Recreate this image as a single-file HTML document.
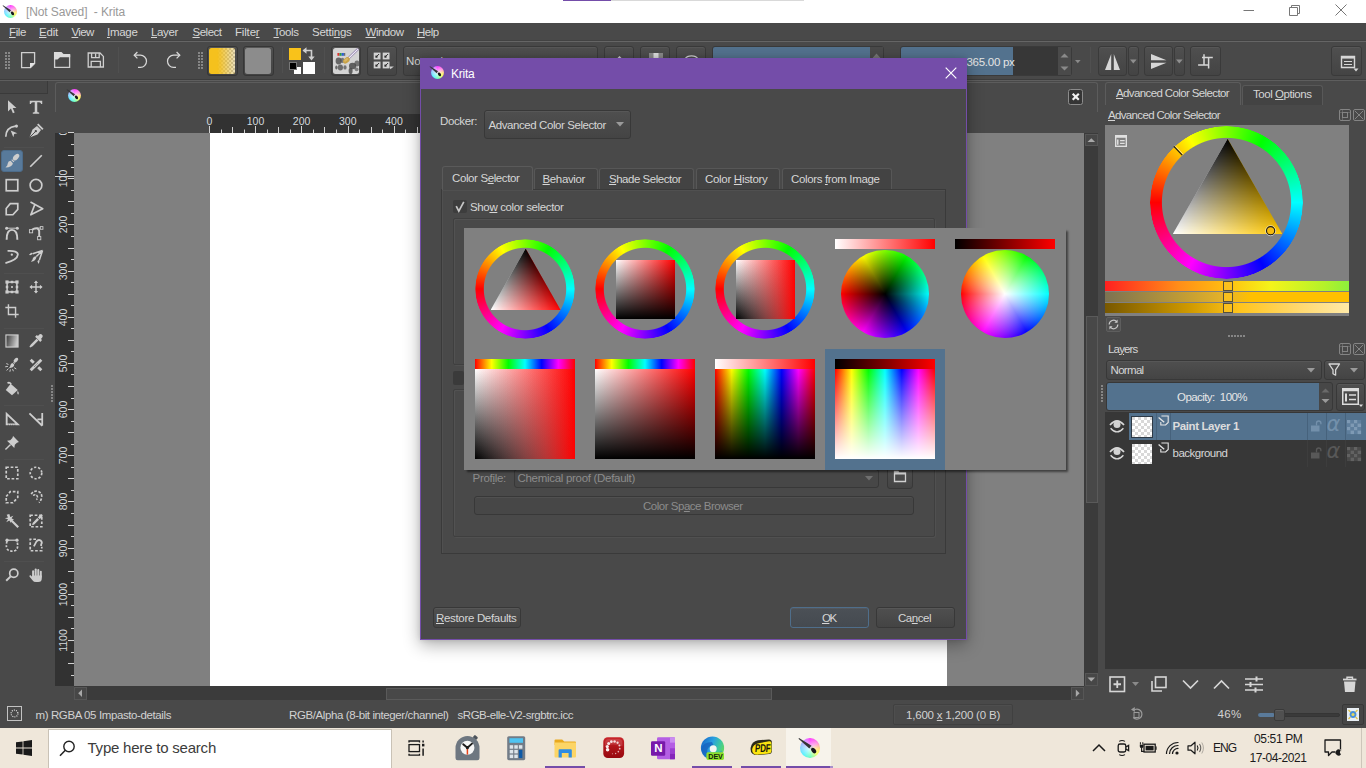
<!DOCTYPE html>
<html lang="en"><head><meta charset="utf-8"><title>Krita</title>
<style>
html,body{margin:0;padding:0;}
body{width:1366px;height:768px;overflow:hidden;position:relative;background:#494949;font-family:"Liberation Sans",sans-serif;font-size:11px;color:#d2d2d2;}
.a{position:absolute;box-sizing:border-box;}
.t{position:absolute;white-space:pre;}
u{text-decoration:underline;text-underline-offset:1px;text-decoration-thickness:1px;}
svg{overflow:visible;}
</style></head><body>
<!-- p10_chrome -->
<div class="a" style="left:0px;top:0px;width:1366px;height:23px;background:#ffffff;"></div>
<div class="a" style="left:563px;top:0px;width:48px;height:1px;background:#744da9;"></div>
<div class="a" style="left:611px;top:0px;width:193px;height:1px;background:#d9d9d9;"></div>
<div class="a" style="left:1px;top:1.5px;width:16px;height:16px;"><div class="a" style="left:2.5px;top:3px;width:13px;height:13px;border-radius:50%;background:radial-gradient(circle at 48% 55%,rgba(255,255,255,.8) 0,rgba(255,255,255,.35) 38%,rgba(255,255,255,0) 68%),conic-gradient(from 0deg,#ff3cff 0deg,#ff8ee0 55deg,#ffee60 105deg,#f4ff58 130deg,#58ffb0 175deg,#3cf0ff 225deg,#8cc4ff 285deg,#e07cff 335deg,#ff3cff 360deg);"></div><svg class="a" style="left:0;top:0" width="16" height="16" viewBox="0 0 16 16"><path d="M1.98 3.26L10.12 8.24L8.68 10.16L1.62 3.74Z" fill="#353538"/><path d="M10.12 8.24L10.9 8.9L9.5 10.8L8.68 10.16Z" fill="#c9c9d2"/><ellipse cx="11.5" cy="11.4" rx="2" ry="1.35" transform="rotate(52 11.5 11.4)" fill="#16161c"/></svg></div>
<span class="t" style="left:26px;top:3.5px;font-size:12px;line-height:16px;color:#999999;letter-spacing:-0.119px;">[Not Saved]  - Krita</span>
<svg class="a" style="left:1243px;top:5px;" width="12" height="12" viewBox="0 0 12 12"><path d="M0.5 5.5H11" stroke="#777" stroke-width="1" fill="none"/></svg>
<svg class="a" style="left:1289px;top:5px;" width="12" height="12" viewBox="0 0 12 12"><path d="M0.5 2.5H8.5V10.5H0.5Z M2.5 2.5V0.5H10.5V8.5H8.5" stroke="#777" stroke-width="1" fill="none"/></svg>
<svg class="a" style="left:1335px;top:4px;" width="12" height="12" viewBox="0 0 12 12"><path d="M0.5 0.5L11.5 11.5M11.5 0.5L0.5 11.5" stroke="#777" stroke-width="1" fill="none"/></svg>
<div class="a" style="left:0px;top:23px;width:1366px;height:18px;background:#494949;"></div>
<span class="t" style="left:9px;top:25.05px;font-size:11.5px;line-height:15.5px;color:#d6d6d6;letter-spacing:-0.382px;"><u>F</u>ile</span>
<span class="t" style="left:39px;top:25.05px;font-size:11.5px;line-height:15.5px;color:#d6d6d6;letter-spacing:-0.204px;"><u>E</u>dit</span>
<span class="t" style="left:71.5px;top:25.05px;font-size:11.5px;line-height:15.5px;color:#d6d6d6;letter-spacing:-0.679px;"><u>V</u>iew</span>
<span class="t" style="left:107px;top:25.05px;font-size:11.5px;line-height:15.5px;color:#d6d6d6;letter-spacing:-0.292px;"><u>I</u>mage</span>
<span class="t" style="left:151px;top:25.05px;font-size:11.5px;line-height:15.5px;color:#d6d6d6;letter-spacing:-0.353px;"><u>L</u>ayer</span>
<span class="t" style="left:192.5px;top:25.05px;font-size:11.5px;line-height:15.5px;color:#d6d6d6;letter-spacing:-0.493px;"><u>S</u>elect</span>
<span class="t" style="left:235px;top:25.05px;font-size:11.5px;line-height:15.5px;color:#d6d6d6;letter-spacing:-0.176px;">Filte<u>r</u></span>
<span class="t" style="left:273.5px;top:25.05px;font-size:11.5px;line-height:15.5px;color:#d6d6d6;letter-spacing:-0.369px;"><u>T</u>ools</span>
<span class="t" style="left:312px;top:25.05px;font-size:11.5px;line-height:15.5px;color:#d6d6d6;letter-spacing:-0.256px;">Setti<u>n</u>gs</span>
<span class="t" style="left:365.5px;top:25.05px;font-size:11.5px;line-height:15.5px;color:#d6d6d6;letter-spacing:-0.483px;"><u>W</u>indow</span>
<span class="t" style="left:417px;top:25.05px;font-size:11.5px;line-height:15.5px;color:#d6d6d6;letter-spacing:-0.537px;"><u>H</u>elp</span>
<div class="a" style="left:0px;top:40px;width:1366px;height:1px;background:#424242;"></div>
<div class="a" style="left:0px;top:41px;width:1366px;height:1px;background:#656565;"></div>
<div class="a" style="left:0px;top:79px;width:1366px;height:1px;background:#3d3d3d;"></div>
<div class="a" style="left:0px;top:80px;width:1366px;height:1px;background:#5e5e5e;"></div>
<!-- p20_toolbar -->
<svg class="a" style="left:5px;top:52px;" width="5" height="17" viewBox="0 0 5 17"><g fill="#868686"><rect x="0" y="0" width="2" height="2"/><rect x="3" y="0" width="2" height="2"/><rect x="0" y="3" width="2" height="2"/><rect x="3" y="3" width="2" height="2"/><rect x="0" y="6" width="2" height="2"/><rect x="3" y="6" width="2" height="2"/><rect x="0" y="9" width="2" height="2"/><rect x="3" y="9" width="2" height="2"/><rect x="0" y="12" width="2" height="2"/><rect x="3" y="12" width="2" height="2"/><rect x="0" y="15" width="2" height="2"/><rect x="3" y="15" width="2" height="2"/></g></svg>
<svg class="a" style="left:20px;top:51px;" width="16" height="18" viewBox="0 0 16 18"><path d="M1.6 1.6H14.6V12.5L10.5 16.6H1.6Z" fill="none" stroke="#cfcfcf" stroke-width="1.3"/><path d="M10 12h5L10 17z" fill="#e4e4e4"/></svg>
<svg class="a" style="left:53px;top:51px;" width="18" height="18" viewBox="0 0 18 18"><path d="M1.6 1.6V16.4H16.6V3.6" fill="none" stroke="#cfcfcf" stroke-width="1.3"/><path d="M1 1H8.5L10.5 3H17.2V6.2H7L4.5 8.6H1Z" fill="#dcdcdc"/></svg>
<svg class="a" style="left:87px;top:51px;" width="18" height="17" viewBox="0 0 18 17"><path d="M1.2 2H13L16.4 5.4V16H1.2Z" fill="none" stroke="#cfcfcf" stroke-width="1.3"/><path d="M4.6 2V6.6H12.2V2M4.2 16V10.4H13.4V16M8.6 2.4V6.2" fill="none" stroke="#cfcfcf" stroke-width="1.3"/></svg>
<div class="a" style="left:118px;top:47px;width:1px;height:26px;background:#505050;"></div>
<svg class="a" style="left:132.8px;top:51px;" width="14" height="18" viewBox="0 0 14 18"><path d="M1.4 4.2H7.4A6.1 6.1 0 0 1 7.4 16.4H5" fill="none" stroke="#d8d8d8" stroke-width="1.25"/><path d="M4.4 1L1.2 4.2L4.4 7.4" fill="none" stroke="#d8d8d8" stroke-width="1.25"/></svg>
<svg class="a" style="left:166.8px;top:51px;" width="14" height="18" viewBox="0 0 14 18"><path d="M12.6 4.2H6.6A6.1 6.1 0 0 0 6.6 16.4H9" fill="none" stroke="#d8d8d8" stroke-width="1.25"/><path d="M9.6 1L12.8 4.2L9.6 7.4" fill="none" stroke="#d8d8d8" stroke-width="1.25"/></svg>
<svg class="a" style="left:197.8px;top:52px;" width="5" height="17" viewBox="0 0 5 17"><g fill="#868686"><rect x="0" y="0" width="2" height="2"/><rect x="3" y="0" width="2" height="2"/><rect x="0" y="3" width="2" height="2"/><rect x="3" y="3" width="2" height="2"/><rect x="0" y="6" width="2" height="2"/><rect x="3" y="6" width="2" height="2"/><rect x="0" y="9" width="2" height="2"/><rect x="3" y="9" width="2" height="2"/><rect x="0" y="12" width="2" height="2"/><rect x="3" y="12" width="2" height="2"/><rect x="0" y="15" width="2" height="2"/><rect x="3" y="15" width="2" height="2"/></g></svg>
<div class="a" style="left:207px;top:45.5px;width:30.5px;height:30.5px;background:linear-gradient(180deg,#4f4f4f,#444444);border:1px solid #363636;border-radius:3px;box-shadow:inset 0 1px 0 rgba(255,255,255,.05);"><div class="a" style="left:1.2px;top:1.5px;width:26px;height:26px;background:#f5c11d;border-radius:2.5px;overflow:hidden;"><div class="a" style="left:0;top:0;width:100%;height:100%;background:repeating-conic-gradient(#e9e9e9 0 25%,#b9b9b9 0 50%) 0 0/4px 4px;-webkit-mask:linear-gradient(90deg,transparent 32%,rgba(0,0,0,.78) 100%);mask:linear-gradient(90deg,transparent 32%,rgba(0,0,0,.78) 100%);"></div></div></div>
<div class="a" style="left:243px;top:45.5px;width:30.5px;height:30.5px;background:linear-gradient(180deg,#4f4f4f,#444444);border:1px solid #363636;border-radius:3px;box-shadow:inset 0 1px 0 rgba(255,255,255,.05);"><div class="a" style="left:1.2px;top:1.5px;width:26px;height:26px;background:#8c8c8c;border-radius:2.5px;"></div></div>
<div class="a" style="left:282px;top:47px;width:1px;height:26px;background:#505050;"></div>
<div class="a" style="left:289px;top:48px;width:12.2px;height:12.2px;background:#f9c21a;"></div>
<div class="a" style="left:303px;top:62px;width:12.2px;height:12.2px;background:#ffffff;"></div>
<div class="a" style="left:293.8px;top:67px;width:6.8px;height:6.6px;background:#ffffff;"></div>
<div class="a" style="left:289px;top:62.2px;width:8px;height:8px;background:#000000;border:1px solid #777;"></div>
<svg class="a" style="left:302px;top:47px;" width="14" height="14" viewBox="0 0 14 14"><path d="M1.5 3.5H9.5V10.5" fill="none" stroke="#cfcfcf" stroke-width="1.6"/><path d="M0.5 3.5L4.5 0.3V6.7Z M9.5 13.5L6.3 9.5H12.7Z" fill="#cfcfcf"/></svg>
<div class="a" style="left:324px;top:47px;width:1px;height:26px;background:#505050;"></div>
<div class="a" style="left:330.8px;top:45.5px;width:30.5px;height:30.5px;background:linear-gradient(180deg,#4f4f4f,#444444);border:1px solid #3a3a3a;border-radius:3px;box-shadow:inset 0 1px 0 rgba(255,255,255,.05);"><div class="a" style="left:1.2px;top:1.5px;width:26px;height:26px;background:#d4d4d4;border-radius:2.5px;overflow:hidden;"><svg width="27" height="27" viewBox="0 0 27 27" style="position:absolute;left:0;top:0"><rect x="4.4" y="5" width="2.1" height="2.8" fill="#e03030"/><rect x="6.5" y="5" width="2.1" height="2.8" fill="#2ea040"/><rect x="8.6" y="5" width="2.3" height="2.8" fill="#2c5fd0"/><rect x="11.2" y="5" width="1" height="2.8" fill="#555"/><g fill="#4a4a4a"><ellipse cx="5.6" cy="13" rx="3" ry="3.4" opacity=".8"/><ellipse cx="9.4" cy="12.4" rx="2.2" ry="2.6" opacity=".65"/><ellipse cx="7.4" cy="19.6" rx="2.6" ry="3" opacity=".75"/><ellipse cx="3.4" cy="19.6" rx="1.2" ry="2" opacity=".8"/><ellipse cx="12" cy="19.4" rx="1.6" ry="2.2" opacity=".7"/><ellipse cx="19.6" cy="18" rx="3.6" ry="3.2" opacity=".85"/><ellipse cx="24" cy="15.6" rx="2.6" ry="3" opacity=".7"/><ellipse cx="17.6" cy="23" rx="2" ry="3.2" opacity=".85"/><ellipse cx="23.6" cy="21.4" rx="2" ry="1.8" opacity=".6"/></g><path d="M25.4 0.6L14.6 11.2" stroke="#8a7aa6" stroke-width="2.4"/><path d="M25.2 0.8L14.8 11" stroke="#f4f0fa" stroke-width="1.1"/><ellipse cx="13.4" cy="12.4" rx="3.8" ry="2.5" transform="rotate(-40 13.4 12.4)" fill="#c9a348"/><ellipse cx="13" cy="11.8" rx="2.4" ry="1.2" transform="rotate(-40 13 11.8)" fill="#e0c070" opacity=".7"/></svg></div></div>
<div class="a" style="left:366.8px;top:45.5px;width:30.5px;height:30.5px;background:linear-gradient(180deg,#4f4f4f,#444444);border:1px solid #3a3a3a;border-radius:3px;box-shadow:inset 0 1px 0 rgba(255,255,255,.05);"><svg width="29" height="29" viewBox="0 0 29 29" style="position:absolute;left:-1.4px;top:-1.2px"><rect x="7.7" y="7.6" width="6.8" height="6.8" fill="#d2d2d2"/><rect x="9.4" y="10.6" width="2.1" height="2.1" fill="#2c2c2c"/><path d="M11.1 11l2-2" stroke="#2c2c2c" stroke-width="1"/><rect x="16.7" y="7.6" width="6.8" height="6.8" fill="#d2d2d2"/><rect x="18.4" y="10.6" width="2.1" height="2.1" fill="#2c2c2c"/><path d="M20.1 11l2-2" stroke="#2c2c2c" stroke-width="1"/><rect x="7.7" y="16.6" width="6.8" height="6.8" fill="#d2d2d2"/><rect x="9.4" y="19.6" width="2.1" height="2.1" fill="#2c2c2c"/><path d="M11.1 20l2-2" stroke="#2c2c2c" stroke-width="1"/><rect x="16.7" y="16.6" width="6.8" height="6.8" fill="#d2d2d2"/><rect x="18.4" y="19.6" width="2.1" height="2.1" fill="#2c2c2c"/><path d="M20.1 20l2-2" stroke="#2c2c2c" stroke-width="1"/><path d="M23.5 21.4h4.4l-3.6 2.8z" fill="#cfcfcf"/></svg></div>
<div class="a" style="left:403px;top:45.5px;width:195px;height:30.5px;background:linear-gradient(180deg,#4f4f4f,#444444);border:1px solid #3a3a3a;border-radius:3px;box-shadow:inset 0 1px 0 rgba(255,255,255,.05);"></div>
<span class="t" style="left:406px;top:54.25px;font-size:11.5px;line-height:15.5px;color:#d2d2d2;letter-spacing:-0.010px;">Normal</span>
<div class="a" style="left:603.8px;top:45.5px;width:30.7px;height:30.5px;background:linear-gradient(180deg,#4f4f4f,#444444);border:1px solid #3a3a3a;border-radius:3px;box-shadow:inset 0 1px 0 rgba(255,255,255,.05);"><svg width="29" height="29" style="position:absolute;left:0;top:0"><path d="M14.5 9l4 4h-8z" fill="#cfcfcf"/></svg></div>
<div class="a" style="left:639.8px;top:45.5px;width:30.7px;height:30.5px;background:linear-gradient(180deg,#4f4f4f,#444444);border:1px solid #3a3a3a;border-radius:3px;box-shadow:inset 0 1px 0 rgba(255,255,255,.05);"><svg width="29" height="29" style="position:absolute;left:0;top:0"><rect x="8" y="6" width="14" height="5" fill="#8a8a8a"/><rect x="12.5" y="6" width="5" height="5" fill="#ddd"/></svg></div>
<div class="a" style="left:675.8px;top:45.5px;width:30.7px;height:30.5px;background:linear-gradient(180deg,#4f4f4f,#444444);border:1px solid #3a3a3a;border-radius:3px;box-shadow:inset 0 1px 0 rgba(255,255,255,.05);"><svg width="29" height="29" style="position:absolute;left:0;top:0"><path d="M8 12a7 5 0 0 1 13 0" stroke="#cfcfcf" stroke-width="1.3" fill="none"/></svg></div>
<div class="a" style="left:711.5px;top:45.5px;width:172px;height:30.5px;background:#373737;border:1px solid #3a3a3a;border-radius:3px;"></div>
<div class="a" style="left:712.5px;top:46.5px;width:157px;height:28.5px;background:#53728e;border-radius:2px 0 0 2px;"></div>
<div class="a" style="left:870px;top:46.5px;width:12.5px;height:28.5px;background:#4a4a4a;"><svg width="13" height="29" style="position:absolute;left:0;top:0"><path d="M2.5 11l4-4.5l4 4.5z M2.5 18l4 4.5l4-4.5z" fill="#777"/></svg></div>
<div class="a" style="left:899.5px;top:45.5px;width:172px;height:30.5px;background:#373737;border:1px solid #3a3a3a;border-radius:3px;"></div>
<div class="a" style="left:900.5px;top:46.5px;width:112px;height:28.5px;background:#53728e;border-radius:2px 0 0 2px;"></div>
<div class="a" style="left:1058px;top:46.5px;width:12.5px;height:28.5px;background:#4a4a4a;"><svg width="13" height="29" style="position:absolute;left:0;top:0"><path d="M2.5 10.6l4-4l4 4z M2.5 19.4l4 4l4-4z" fill="#8a8a8a"/></svg></div>
<span class="t" style="left:940px;top:54.55px;font-size:11.5px;line-height:15.5px;color:#e4e4e4;letter-spacing:-0.713px;">Size:</span>
<span class="t" style="left:966.5px;top:54.55px;font-size:11.5px;line-height:15.5px;color:#e4e4e4;letter-spacing:-0.279px;">365.00 px</span>
<svg class="a" style="left:1074.8px;top:59.6px;" width="6" height="4" viewBox="0 0 6 4"><path d="M0 0h5.6l-2.8 3.2z" fill="#8a8a8a"/></svg>
<div class="a" style="left:1090px;top:47px;width:1px;height:26px;background:#505050;"></div>
<div class="a" style="left:1097.5px;top:45.5px;width:29px;height:30.5px;background:linear-gradient(180deg,#4f4f4f,#444444);border:1px solid #3a3a3a;border-radius:3px;box-shadow:inset 0 1px 0 rgba(255,255,255,.05);"><svg width="27" height="29" style="position:absolute;left:0;top:0"><path d="M12.2 7v16H6z M14.8 7v16h6.2z" fill="#d6d6d6"/></svg></div>
<div class="a" style="left:1128px;top:45.5px;width:10.5px;height:30.5px;background:linear-gradient(180deg,#4f4f4f,#444444);border:1px solid #3a3a3a;border-radius:3px;box-shadow:inset 0 1px 0 rgba(255,255,255,.05);"><svg width="9" height="29" style="position:absolute;left:0;top:0"><path d="M1 12.5h6.6l-3.3 4z" fill="#8f8f8f"/></svg></div>
<div class="a" style="left:1143.5px;top:45.5px;width:29px;height:30.5px;background:linear-gradient(180deg,#4f4f4f,#444444);border:1px solid #3a3a3a;border-radius:3px;box-shadow:inset 0 1px 0 rgba(255,255,255,.05);"><svg width="27" height="29" style="position:absolute;left:0;top:0"><path d="M6 7v6.2h15.5z M6 15.8v6.2l15.5-6.2z" fill="#d6d6d6"/></svg></div>
<div class="a" style="left:1174px;top:45.5px;width:10.5px;height:30.5px;background:linear-gradient(180deg,#4f4f4f,#444444);border:1px solid #3a3a3a;border-radius:3px;box-shadow:inset 0 1px 0 rgba(255,255,255,.05);"><svg width="9" height="29" style="position:absolute;left:0;top:0"><path d="M1 12.5h6.6l-3.3 4z" fill="#8f8f8f"/></svg></div>
<div class="a" style="left:1189.5px;top:45.5px;width:31px;height:30.5px;background:linear-gradient(180deg,#4f4f4f,#444444);border:1px solid #3a3a3a;border-radius:3px;box-shadow:inset 0 1px 0 rgba(255,255,255,.05);"><svg width="29" height="29" style="position:absolute;left:0;top:0"><path d="M11 10.6H21.8M13 7.2V18.5M7.1 17.9H18.3M17.6 10.5V21.5" stroke="#d6d6d6" stroke-width="1.5" fill="none"/></svg></div>
<div class="a" style="left:1330.5px;top:45.5px;width:31px;height:30.5px;background:linear-gradient(180deg,#4f4f4f,#444444);border:1px solid #3a3a3a;border-radius:3px;box-shadow:inset 0 1px 0 rgba(255,255,255,.05);"><svg width="29" height="29" style="position:absolute;left:0;top:0"><path d="M9.5 9.5H22.5V20.5H9.5Z" stroke="#d6d6d6" stroke-width="1.4" fill="none"/><path d="M9 9h14v2.6H9z" fill="#d6d6d6"/><path d="M12 14.5h8M12 17.5h8" stroke="#d6d6d6" stroke-width="1.2"/><path d="M21.5 21.5h5l-2.5 3z" fill="#d6d6d6"/></svg></div>
<!-- p30_toolbox -->
<div class="a" style="left:0px;top:81px;width:48px;height:13px;background:#464646;border-right:1px solid #3a3a3a;border-bottom:1px solid #3a3a3a;"></div>
<div class="a" style="left:1px;top:149.7px;width:22px;height:22.3px;background:#587a9b;border-radius:3px;border:1px solid #4d6c8a;"></div>
<svg class="a" style="left:4px;top:99px;" width="16" height="16" viewBox="0 0 18 18"><path d="M4.5 1.5V14L7.8 10.8L10 16L12 15.2L9.8 10H14Z" fill="#cdcdcd"/></svg>
<svg class="a" style="left:28px;top:99px;" width="16" height="16" viewBox="0 0 18 18"><path d="M2 2H16V5.5H14.8Q14.5 3.6 12.5 3.6H10.4V14Q10.4 15.2 12.6 15.2V16.5H5.4V15.2Q7.6 15.2 7.6 14V3.6H5.5Q3.5 3.6 3.2 5.5H2Z" fill="#cdcdcd"/></svg>
<svg class="a" style="left:4px;top:123px;" width="16" height="16" viewBox="0 0 18 18"><path d="M2 15.5Q2 5 13 3.5" fill="none" stroke="#cdcdcd" stroke-width="1.9"/><circle cx="14" cy="3.5" r="1.8" fill="#cdcdcd"/><path d="M7.5 8.5L15 11.5L11.5 12.5L10.5 16Z" fill="#cdcdcd"/></svg>
<svg class="a" style="left:28px;top:123px;" width="16" height="16" viewBox="0 0 18 18"><path d="M1.7 16.3L5.1 7.3L10.1 3.4L14.6 7.9L10.7 12.9Z" fill="#cdcdcd"/><path d="M1.7 16.3L8 10" stroke="#494949" stroke-width="1.1"/><circle cx="8.8" cy="9.2" r="1.3" fill="#494949"/><path d="M10.9 1.3L16.7 7.1" stroke="#cdcdcd" stroke-width="2"/></svg>
<svg class="a" style="left:4px;top:152.5px;" width="16" height="16" viewBox="0 0 18 18"><ellipse cx="13.6" cy="4.6" rx="2.6" ry="4.4" transform="rotate(42 13.6 4.6)" fill="#cdcdcd"/><path d="M8.6 7.4L11.2 10" stroke="#cdcdcd" stroke-width="1.3"/><path d="M7.4 8.8L10 11.4Q9.4 16 1.6 16.2Q4.4 14 4.2 11.8Q4.6 9 7.4 8.8Z" fill="#cdcdcd"/></svg>
<svg class="a" style="left:28px;top:152.5px;" width="16" height="16" viewBox="0 0 18 18"><path d="M2.5 15.5L15.5 2.5" fill="none" stroke="#cdcdcd" stroke-width="1.9"/></svg>
<svg class="a" style="left:4px;top:177px;" width="16" height="16" viewBox="0 0 18 18"><rect x="2.5" y="3" width="13" height="12.5" fill="none" stroke="#cdcdcd" stroke-width="1.9"/></svg>
<svg class="a" style="left:28px;top:177px;" width="16" height="16" viewBox="0 0 18 18"><circle cx="9" cy="9.2" r="6.6" fill="none" stroke="#cdcdcd" stroke-width="1.9"/></svg>
<svg class="a" style="left:4px;top:201px;" width="16" height="16" viewBox="0 0 18 18"><path d="M2.5 8.5L7 3H15.5V9.5L10 15.5H2.5Z" fill="none" stroke="#cdcdcd" stroke-width="1.9"/></svg>
<svg class="a" style="left:28px;top:201px;" width="16" height="16" viewBox="0 0 18 18"><path d="M2.8 1.2L16.6 8.6L3.2 15.6L7.8 3.6" fill="none" stroke="#cdcdcd" stroke-width="1.9" stroke-linejoin="round"/></svg>
<svg class="a" style="left:4px;top:225px;" width="16" height="16" viewBox="0 0 18 18"><path d="M3 16.5Q3 5.5 9 5.5Q15 5.5 15 16.5" fill="none" stroke="#cdcdcd" stroke-width="2.2"/><path d="M3 3.6L15 3.6" stroke="#cdcdcd" stroke-width="1.1"/><circle cx="3" cy="3.6" r="1.7" fill="#cdcdcd"/><circle cx="15" cy="3.6" r="1.7" fill="#cdcdcd"/></svg>
<svg class="a" style="left:28px;top:225px;" width="16" height="16" viewBox="0 0 18 18"><path d="M3.5 6.8Q6 3.4 10 3.6Q13 4.4 12.6 9V15" fill="none" stroke="#cdcdcd" stroke-width="2.2"/><rect x="1.6" y="5.2" width="3.6" height="3.6" fill="#494949" stroke="#cdcdcd" stroke-width="1"/><rect x="10.8" y="13" width="3.6" height="3.6" fill="#494949" stroke="#cdcdcd" stroke-width="1"/><rect x="13.8" y="1.8" width="3" height="3" fill="#494949" stroke="#cdcdcd" stroke-width="1"/><path d="M10 3.4L14 3.4" stroke="#cdcdcd" stroke-width="1"/></svg>
<svg class="a" style="left:4px;top:249px;" width="16" height="16" viewBox="0 0 18 18"><path d="M4 2.2Q15.5 1.6 15.6 6.4Q15 12.4 1.6 15.8" fill="none" stroke="#cdcdcd" stroke-width="2"/><circle cx="8.8" cy="6.4" r="1.3" fill="#cdcdcd"/></svg>
<svg class="a" style="left:28px;top:249px;" width="16" height="16" viewBox="0 0 18 18"><path d="M16.4 1.6L9.4 8.4M16.4 1.6L5.2 5.4M16.4 1.6L12.8 12.4" fill="none" stroke="#cdcdcd" stroke-width="1.7"/><path d="M9.6 8.2Q9.6 13.6 3.2 14.4Q5.6 11.6 5.6 10Q6.6 8 9.6 8.2Z" fill="#cdcdcd"/><path d="M5.4 5.2Q3.4 7.6 1 6.6Q2.6 5.8 3 4.6Q4 3.8 5.4 5.2Z" fill="#cdcdcd"/><path d="M12.9 12.2Q13.6 15.2 11.6 16.8Q11.4 15 10.6 14.4Q10.6 12.8 12.9 12.2Z" fill="#cdcdcd"/></svg>
<svg class="a" style="left:4px;top:279px;" width="16" height="16" viewBox="0 0 18 18"><rect x="3.5" y="3.5" width="11" height="11" fill="none" stroke="#cdcdcd" stroke-width="1.7"/><g fill="#cdcdcd"><rect x="1.6" y="1.6" width="3.6" height="3.6"/><rect x="12.8" y="1.6" width="3.6" height="3.6"/><rect x="1.6" y="12.8" width="3.6" height="3.6"/><rect x="12.8" y="12.8" width="3.6" height="3.6"/><rect x="7.6" y="2" width="2.8" height="2.8"/><rect x="7.6" y="13.2" width="2.8" height="2.8"/><rect x="2" y="7.6" width="2.8" height="2.8"/><rect x="13.2" y="7.6" width="2.8" height="2.8"/><rect x="8" y="8" width="2" height="2"/></g></svg>
<svg class="a" style="left:28px;top:279px;" width="16" height="16" viewBox="0 0 18 18"><path d="M9 3V15M3 9H15" fill="none" stroke="#cdcdcd" stroke-width="1.6"/><path d="M9 1.6L11.4 4.6H6.6Z M9 16.4L11.4 13.4H6.6Z M1.6 9L4.6 6.6V11.4Z M16.4 9L13.4 6.6V11.4Z" fill="#cdcdcd"/></svg>
<svg class="a" style="left:4px;top:303px;" width="16" height="16" viewBox="0 0 18 18"><path d="M5 1.5V13H16.5 M1.5 5H13V16.5" fill="none" stroke="#cdcdcd" stroke-width="1.6"/></svg>
<svg class="a" style="left:4px;top:333px;" width="16" height="16" viewBox="0 0 18 18"><defs><linearGradient id="tg1" x1="0" y1="0" x2="1" y2="0.25"><stop offset="0" stop-color="#343434"/><stop offset="1" stop-color="#c8c8c8"/></linearGradient></defs><rect x="2.2" y="2.2" width="13.6" height="13.6" fill="url(#tg1)" stroke="#cdcdcd" stroke-width="1.3"/></svg>
<svg class="a" style="left:28px;top:333px;" width="16" height="16" viewBox="0 0 18 18"><path d="M12.2 2.2Q13.6 0.2 15.6 1.6Q17.6 3.2 16 5.2L14.6 6.8L15.8 8L13.8 10L8 4.2L10 2.2L11.2 3.4Z" fill="#cdcdcd"/><path d="M9.6 6.4L11.6 8.4L5.2 14.8L2.6 16.4L1.6 15.4L3.2 12.8Z" fill="#cdcdcd"/></svg>
<svg class="a" style="left:4px;top:357px;" width="16" height="16" viewBox="0 0 18 18"><ellipse cx="13.4" cy="3.6" rx="1.9" ry="3.2" transform="rotate(42 13.4 3.6)" fill="#cdcdcd"/><path d="M10.6 6L12 7.4" stroke="#cdcdcd" stroke-width="1.2"/><path d="M9.6 6.8L11.6 8.8Q11 12.4 5.4 12.6Q7.4 10.8 7.2 9.4Q7.6 7 9.6 6.8Z" fill="#cdcdcd"/><path d="M5 8.4L2.6 7.4M4.4 10.6L1.4 11M5 13L3 15.2M7.2 14L6.6 16.6M9.6 13.6L10.6 16M11.4 12L13.8 13.4" stroke="#cdcdcd" stroke-width="1.1"/></svg>
<svg class="a" style="left:28px;top:357px;" width="16" height="16" viewBox="0 0 18 18"><path d="M3 15L15 3" stroke="#cdcdcd" stroke-width="3.2"/><path d="M3 3L6.5 6.5M11.5 11.5L15 15" stroke="#cdcdcd" stroke-width="3.2"/><path d="M7 11L11 7" stroke="#494949" stroke-width="1" stroke-dasharray="1 1"/></svg>
<svg class="a" style="left:4px;top:381px;" width="16" height="16" viewBox="0 0 18 18"><path d="M7.5 3L15.5 10L9 16L2 10Z" fill="#cdcdcd"/><path d="M4 2.5Q6 1 8 3.5" fill="none" stroke="#cdcdcd" stroke-width="1.9"/><path d="M15.5 11Q17.5 14 15.8 15.5Q14 14 15.5 11Z" fill="#cdcdcd"/></svg>
<svg class="a" style="left:4px;top:411px;" width="16" height="16" viewBox="0 0 18 18"><path d="M3 3.2V15H15.4Z" fill="none" stroke="#cdcdcd" stroke-width="2.1" stroke-linejoin="miter"/><path d="M5 16.6v-1.2M7.4 16.6v-1.2M9.8 16.6v-1.2M12.2 16.6v-1.2" stroke="#494949" stroke-width="1"/></svg>
<svg class="a" style="left:28px;top:411px;" width="16" height="16" viewBox="0 0 18 18"><path d="M1.6 2.6L16 16.6M16 2.2V16.6M10.6 9.4H16" fill="none" stroke="#cdcdcd" stroke-width="2"/></svg>
<svg class="a" style="left:4px;top:435px;" width="16" height="16" viewBox="0 0 18 18"><path d="M10.2 1.2L16.8 7.8L14.6 8.6L12.2 11L11.6 14.6L3.4 6.4L7 5.8L9.4 3.4Z" fill="#cdcdcd"/><path d="M7.4 10.6L1.6 16.4" stroke="#cdcdcd" stroke-width="1.6"/></svg>
<svg class="a" style="left:4px;top:465px;" width="16" height="16" viewBox="0 0 18 18"><rect x="2.5" y="2.5" width="13" height="13" fill="none" stroke="#cdcdcd" stroke-width="1.9" stroke-dasharray="3 2"/></svg>
<svg class="a" style="left:28px;top:465px;" width="16" height="16" viewBox="0 0 18 18"><circle cx="9" cy="9" r="6.5" fill="none" stroke="#cdcdcd" stroke-width="1.9" stroke-dasharray="2.6 2"/></svg>
<svg class="a" style="left:4px;top:489px;" width="16" height="16" viewBox="0 0 18 18"><path d="M2.5 8.5L7 3H15.5V9.5L10 15.5H2.5Z" fill="none" stroke="#cdcdcd" stroke-width="1.9" stroke-dasharray="3 2"/></svg>
<svg class="a" style="left:28px;top:489px;" width="16" height="16" viewBox="0 0 18 18"><path d="M3.6 5.8Q6 1.6 11 2.6Q16 4.4 15.4 9.4Q14.6 13 12.4 15.4" fill="none" stroke="#cdcdcd" stroke-width="1.9" stroke-dasharray="3 1.6"/><path d="M5.6 7.2Q9.6 5.4 10.6 8.6Q11 11 9.4 12" fill="none" stroke="#cdcdcd" stroke-width="1.7" stroke-dasharray="2.6 1.4"/></svg>
<svg class="a" style="left:4px;top:513px;" width="16" height="16" viewBox="0 0 18 18"><path d="M7 7L16 16" stroke="#cdcdcd" stroke-width="2.4"/><path d="M6 1L7 4.5L10.5 3L8.5 6L11.5 8L8 8L8 11.5L6 8.5L2.5 10.5L4.5 7L1 6L4.5 5L3 2Z" fill="#cdcdcd"/></svg>
<svg class="a" style="left:28px;top:513px;" width="16" height="16" viewBox="0 0 18 18"><rect x="2.5" y="2.5" width="13" height="13" fill="none" stroke="#cdcdcd" stroke-width="1.9" stroke-dasharray="3 2"/><path d="M14.8 1.4Q16.6 1.6 16.6 3.4L13.2 7L11 4.8Z M10.4 5.6L12.4 7.6L7 13L4.6 13.8L5.2 11.2Z" fill="#cdcdcd"/></svg>
<svg class="a" style="left:4px;top:537px;" width="16" height="16" viewBox="0 0 18 18"><path d="M3.4 4.5Q1.2 13 5.4 15.2Q9 16.6 12.8 15.2Q16.8 13 14.6 4.5" fill="none" stroke="#cdcdcd" stroke-width="1.9" stroke-dasharray="2.6 1.8"/><path d="M3.5 3.6H14.5" stroke="#cdcdcd" stroke-width="1.4"/><circle cx="3.4" cy="3.6" r="1.8" fill="#cdcdcd"/><circle cx="14.6" cy="3.6" r="1.8" fill="#cdcdcd"/></svg>
<svg class="a" style="left:28px;top:537px;" width="16" height="16" viewBox="0 0 18 18"><path d="M9 2.5H2.5V15.5H15.5V11" fill="none" stroke="#cdcdcd" stroke-width="1.9" stroke-dasharray="3 2"/><path d="M6.6 10.6L9.4 5.2Q11.6 2.4 14.2 4Q16.6 6 14.8 8.4L14.8 10" fill="none" stroke="#cdcdcd" stroke-width="2"/></svg>
<svg class="a" style="left:4px;top:567px;" width="16" height="16" viewBox="0 0 18 18"><circle cx="11" cy="7" r="4.6" fill="none" stroke="#cdcdcd" stroke-width="1.9"/><path d="M7.5 10.5L2.5 15.5" stroke="#cdcdcd" stroke-width="2.2"/></svg>
<svg class="a" style="left:28px;top:567px;" width="16" height="16" viewBox="0 0 18 18"><g fill="#cdcdcd"><rect x="4.6" y="3.6" width="2.3" height="8" rx="1.1"/><rect x="7.5" y="1.6" width="2.3" height="9" rx="1.1"/><rect x="10.4" y="2.2" width="2.3" height="9" rx="1.1"/><rect x="13.3" y="4.2" width="2.2" height="8" rx="1.1"/><path d="M4.6 9.5H15.5V13Q15.5 17 11.5 17H9Q6.5 17 5 14.8L1.6 10.6Q1.4 9 3 9.2L4.6 11Z"/></g></svg>
<div class="a" style="left:4px;top:146.5px;width:40px;height:1px;background:#4f4f4f;"></div>
<div class="a" style="left:4px;top:272.5px;width:40px;height:1px;background:#4f4f4f;"></div>
<div class="a" style="left:4px;top:327.5px;width:40px;height:1px;background:#4f4f4f;"></div>
<div class="a" style="left:4px;top:405px;width:40px;height:1px;background:#4f4f4f;"></div>
<div class="a" style="left:4px;top:458.5px;width:40px;height:1px;background:#4f4f4f;"></div>
<div class="a" style="left:4px;top:560.5px;width:40px;height:1px;background:#4f4f4f;"></div>
<svg class="a" style="left:51.3px;top:384.5px;" width="2" height="18" viewBox="0 0 2 18"><rect x="0" y="0" width="2" height="2" fill="#868686"/><rect x="0" y="3" width="2" height="2" fill="#868686"/><rect x="0" y="6" width="2" height="2" fill="#868686"/><rect x="0" y="9" width="2" height="2" fill="#868686"/><rect x="0" y="12" width="2" height="2" fill="#868686"/><rect x="0" y="15" width="2" height="2" fill="#868686"/></svg>
<!-- p40_canvas -->
<div class="a" style="left:55px;top:82px;width:1042.5px;height:30px;border:1px solid #5c5c5c;border-bottom:none;border-radius:3px 3px 0 0;"></div>
<div class="a" style="left:65.2px;top:86.1px;width:16px;height:16px;"><div class="a" style="left:2.5px;top:3px;width:13px;height:13px;border-radius:50%;background:radial-gradient(circle at 48% 55%,rgba(255,255,255,.8) 0,rgba(255,255,255,.35) 38%,rgba(255,255,255,0) 68%),conic-gradient(from 0deg,#ff3cff 0deg,#ff8ee0 55deg,#ffee60 105deg,#f4ff58 130deg,#58ffb0 175deg,#3cf0ff 225deg,#8cc4ff 285deg,#e07cff 335deg,#ff3cff 360deg);"></div><svg class="a" style="left:0;top:0" width="16" height="16" viewBox="0 0 16 16"><path d="M1.98 3.26L10.12 8.24L8.68 10.16L1.62 3.74Z" fill="#353538"/><path d="M10.12 8.24L10.9 8.9L9.5 10.8L8.68 10.16Z" fill="#c9c9d2"/><ellipse cx="11.5" cy="11.4" rx="2" ry="1.35" transform="rotate(52 11.5 11.4)" fill="#16161c"/></svg></div>
<div class="a" style="left:1067.5px;top:89.3px;width:15.7px;height:16px;background:#353535;border:1px solid #8c8c8c;border-radius:2.5px;"><svg width="14" height="14" style="position:absolute;left:0;top:0"><path d="M3.7 3.7L9.8 9.8M9.8 3.7L3.7 9.8" stroke="#f2f2f2" stroke-width="2.2"/></svg></div>
<div class="a" style="left:210px;top:114px;width:737px;height:19px;background:#323232;"></div>
<svg class="a" style="left:210px;top:113px;" width="736" height="20" viewBox="0 0 736 20"><path d="M-0.5 13V20" stroke="#d2d2d2" stroke-width="1"/><path d="M11.5 16.5V20" stroke="#d2d2d2" stroke-width="1"/><path d="M22.5 14V20" stroke="#d2d2d2" stroke-width="1"/><path d="M34.5 16.5V20" stroke="#d2d2d2" stroke-width="1"/><path d="M45.5 13V20" stroke="#d2d2d2" stroke-width="1"/><path d="M57.5 16.5V20" stroke="#d2d2d2" stroke-width="1"/><path d="M68.5 14V20" stroke="#d2d2d2" stroke-width="1"/><path d="M80.5 16.5V20" stroke="#d2d2d2" stroke-width="1"/><path d="M91.5 13V20" stroke="#d2d2d2" stroke-width="1"/><path d="M103.5 16.5V20" stroke="#d2d2d2" stroke-width="1"/><path d="M114.5 14V20" stroke="#d2d2d2" stroke-width="1"/><path d="M126.5 16.5V20" stroke="#d2d2d2" stroke-width="1"/><path d="M138.5 13V20" stroke="#d2d2d2" stroke-width="1"/><path d="M149.5 16.5V20" stroke="#d2d2d2" stroke-width="1"/><path d="M161.5 14V20" stroke="#d2d2d2" stroke-width="1"/><path d="M172.5 16.5V20" stroke="#d2d2d2" stroke-width="1"/><path d="M184.5 13V20" stroke="#d2d2d2" stroke-width="1"/><path d="M195.5 16.5V20" stroke="#d2d2d2" stroke-width="1"/><path d="M207.5 14V20" stroke="#d2d2d2" stroke-width="1"/><path d="M218.5 16.5V20" stroke="#d2d2d2" stroke-width="1"/><path d="M230.5 13V20" stroke="#d2d2d2" stroke-width="1"/><path d="M241.5 16.5V20" stroke="#d2d2d2" stroke-width="1"/><path d="M253.5 14V20" stroke="#d2d2d2" stroke-width="1"/><path d="M264.5 16.5V20" stroke="#d2d2d2" stroke-width="1"/><path d="M276.5 13V20" stroke="#d2d2d2" stroke-width="1"/><path d="M288.5 16.5V20" stroke="#d2d2d2" stroke-width="1"/><path d="M299.5 14V20" stroke="#d2d2d2" stroke-width="1"/><path d="M311.5 16.5V20" stroke="#d2d2d2" stroke-width="1"/><path d="M322.5 13V20" stroke="#d2d2d2" stroke-width="1"/><path d="M334.5 16.5V20" stroke="#d2d2d2" stroke-width="1"/><path d="M345.5 14V20" stroke="#d2d2d2" stroke-width="1"/><path d="M357.5 16.5V20" stroke="#d2d2d2" stroke-width="1"/><path d="M368.5 13V20" stroke="#d2d2d2" stroke-width="1"/><path d="M380.5 16.5V20" stroke="#d2d2d2" stroke-width="1"/><path d="M391.5 14V20" stroke="#d2d2d2" stroke-width="1"/><path d="M403.5 16.5V20" stroke="#d2d2d2" stroke-width="1"/><path d="M415.5 13V20" stroke="#d2d2d2" stroke-width="1"/><path d="M426.5 16.5V20" stroke="#d2d2d2" stroke-width="1"/><path d="M438.5 14V20" stroke="#d2d2d2" stroke-width="1"/><path d="M449.5 16.5V20" stroke="#d2d2d2" stroke-width="1"/><path d="M461.5 13V20" stroke="#d2d2d2" stroke-width="1"/><path d="M472.5 16.5V20" stroke="#d2d2d2" stroke-width="1"/><path d="M484.5 14V20" stroke="#d2d2d2" stroke-width="1"/><path d="M495.5 16.5V20" stroke="#d2d2d2" stroke-width="1"/><path d="M507.5 13V20" stroke="#d2d2d2" stroke-width="1"/><path d="M518.5 16.5V20" stroke="#d2d2d2" stroke-width="1"/><path d="M530.5 14V20" stroke="#d2d2d2" stroke-width="1"/><path d="M541.5 16.5V20" stroke="#d2d2d2" stroke-width="1"/><path d="M553.5 13V20" stroke="#d2d2d2" stroke-width="1"/><path d="M565.5 16.5V20" stroke="#d2d2d2" stroke-width="1"/><path d="M576.5 14V20" stroke="#d2d2d2" stroke-width="1"/><path d="M588.5 16.5V20" stroke="#d2d2d2" stroke-width="1"/><path d="M599.5 13V20" stroke="#d2d2d2" stroke-width="1"/><path d="M611.5 16.5V20" stroke="#d2d2d2" stroke-width="1"/><path d="M622.5 14V20" stroke="#d2d2d2" stroke-width="1"/><path d="M634.5 16.5V20" stroke="#d2d2d2" stroke-width="1"/><path d="M645.5 13V20" stroke="#d2d2d2" stroke-width="1"/><path d="M657.5 16.5V20" stroke="#d2d2d2" stroke-width="1"/><path d="M668.5 14V20" stroke="#d2d2d2" stroke-width="1"/><path d="M680.5 16.5V20" stroke="#d2d2d2" stroke-width="1"/><path d="M692.5 13V20" stroke="#d2d2d2" stroke-width="1"/><path d="M703.5 16.5V20" stroke="#d2d2d2" stroke-width="1"/><path d="M715.5 14V20" stroke="#d2d2d2" stroke-width="1"/><path d="M726.5 16.5V20" stroke="#d2d2d2" stroke-width="1"/></svg>
<span class="t" style="left:189.3px;top:115px;width:40px;text-align:center;font-size:10.5px;line-height:13px;color:#d4d8dc">0</span>
<span class="t" style="left:235.47px;top:115px;width:40px;text-align:center;font-size:10.5px;line-height:13px;color:#d4d8dc">100</span>
<span class="t" style="left:281.64px;top:115px;width:40px;text-align:center;font-size:10.5px;line-height:13px;color:#d4d8dc">200</span>
<span class="t" style="left:327.81px;top:115px;width:40px;text-align:center;font-size:10.5px;line-height:13px;color:#d4d8dc">300</span>
<span class="t" style="left:373.98px;top:115px;width:40px;text-align:center;font-size:10.5px;line-height:13px;color:#d4d8dc">400</span>
<span class="t" style="left:420.15px;top:115px;width:40px;text-align:center;font-size:10.5px;line-height:13px;color:#d4d8dc">500</span>
<span class="t" style="left:466.32px;top:115px;width:40px;text-align:center;font-size:10.5px;line-height:13px;color:#d4d8dc">600</span>
<span class="t" style="left:512.49px;top:115px;width:40px;text-align:center;font-size:10.5px;line-height:13px;color:#d4d8dc">700</span>
<span class="t" style="left:558.66px;top:115px;width:40px;text-align:center;font-size:10.5px;line-height:13px;color:#d4d8dc">800</span>
<span class="t" style="left:604.83px;top:115px;width:40px;text-align:center;font-size:10.5px;line-height:13px;color:#d4d8dc">900</span>
<span class="t" style="left:651px;top:115px;width:40px;text-align:center;font-size:10.5px;line-height:13px;color:#d4d8dc">1000</span>
<span class="t" style="left:697.17px;top:115px;width:40px;text-align:center;font-size:10.5px;line-height:13px;color:#d4d8dc">1100</span>
<span class="t" style="left:743.34px;top:115px;width:40px;text-align:center;font-size:10.5px;line-height:13px;color:#d4d8dc">1200</span>
<span class="t" style="left:789.51px;top:115px;width:40px;text-align:center;font-size:10.5px;line-height:13px;color:#d4d8dc">1300</span>
<span class="t" style="left:835.68px;top:115px;width:40px;text-align:center;font-size:10.5px;line-height:13px;color:#d4d8dc">1400</span>
<span class="t" style="left:881.85px;top:115px;width:40px;text-align:center;font-size:10.5px;line-height:13px;color:#d4d8dc">1500</span>
<span class="t" style="left:928.02px;top:115px;width:40px;text-align:center;font-size:10.5px;line-height:13px;color:#d4d8dc">1600</span>
<div class="a" style="left:55px;top:133px;width:19px;height:553px;background:#323232;overflow:hidden;"></div>
<svg class="a" style="left:55px;top:133px;" width="19" height="553" viewBox="0 0 19 553"><path d="M13 -0.5H19" stroke="#d2d2d2" stroke-width="1"/><path d="M16 11.5H19" stroke="#d2d2d2" stroke-width="1"/><path d="M13 22.5H19" stroke="#d2d2d2" stroke-width="1"/><path d="M16 34.5H19" stroke="#d2d2d2" stroke-width="1"/><path d="M13 45.5H19" stroke="#d2d2d2" stroke-width="1"/><path d="M16 57.5H19" stroke="#d2d2d2" stroke-width="1"/><path d="M13 68.5H19" stroke="#d2d2d2" stroke-width="1"/><path d="M16 80.5H19" stroke="#d2d2d2" stroke-width="1"/><path d="M13 91.5H19" stroke="#d2d2d2" stroke-width="1"/><path d="M16 103.5H19" stroke="#d2d2d2" stroke-width="1"/><path d="M13 115.5H19" stroke="#d2d2d2" stroke-width="1"/><path d="M16 126.5H19" stroke="#d2d2d2" stroke-width="1"/><path d="M13 138.5H19" stroke="#d2d2d2" stroke-width="1"/><path d="M16 149.5H19" stroke="#d2d2d2" stroke-width="1"/><path d="M13 161.5H19" stroke="#d2d2d2" stroke-width="1"/><path d="M16 172.5H19" stroke="#d2d2d2" stroke-width="1"/><path d="M13 184.5H19" stroke="#d2d2d2" stroke-width="1"/><path d="M16 195.5H19" stroke="#d2d2d2" stroke-width="1"/><path d="M13 207.5H19" stroke="#d2d2d2" stroke-width="1"/><path d="M16 218.5H19" stroke="#d2d2d2" stroke-width="1"/><path d="M13 230.5H19" stroke="#d2d2d2" stroke-width="1"/><path d="M16 241.5H19" stroke="#d2d2d2" stroke-width="1"/><path d="M13 253.5H19" stroke="#d2d2d2" stroke-width="1"/><path d="M16 265.5H19" stroke="#d2d2d2" stroke-width="1"/><path d="M13 276.5H19" stroke="#d2d2d2" stroke-width="1"/><path d="M16 288.5H19" stroke="#d2d2d2" stroke-width="1"/><path d="M13 299.5H19" stroke="#d2d2d2" stroke-width="1"/><path d="M16 311.5H19" stroke="#d2d2d2" stroke-width="1"/><path d="M13 322.5H19" stroke="#d2d2d2" stroke-width="1"/><path d="M16 334.5H19" stroke="#d2d2d2" stroke-width="1"/><path d="M13 345.5H19" stroke="#d2d2d2" stroke-width="1"/><path d="M16 357.5H19" stroke="#d2d2d2" stroke-width="1"/><path d="M13 368.5H19" stroke="#d2d2d2" stroke-width="1"/><path d="M16 380.5H19" stroke="#d2d2d2" stroke-width="1"/><path d="M13 392.5H19" stroke="#d2d2d2" stroke-width="1"/><path d="M16 403.5H19" stroke="#d2d2d2" stroke-width="1"/><path d="M13 415.5H19" stroke="#d2d2d2" stroke-width="1"/><path d="M16 426.5H19" stroke="#d2d2d2" stroke-width="1"/><path d="M13 438.5H19" stroke="#d2d2d2" stroke-width="1"/><path d="M16 449.5H19" stroke="#d2d2d2" stroke-width="1"/><path d="M13 461.5H19" stroke="#d2d2d2" stroke-width="1"/><path d="M16 472.5H19" stroke="#d2d2d2" stroke-width="1"/><path d="M13 484.5H19" stroke="#d2d2d2" stroke-width="1"/><path d="M16 495.5H19" stroke="#d2d2d2" stroke-width="1"/><path d="M13 507.5H19" stroke="#d2d2d2" stroke-width="1"/><path d="M16 519.5H19" stroke="#d2d2d2" stroke-width="1"/><path d="M13 530.5H19" stroke="#d2d2d2" stroke-width="1"/><path d="M16 542.5H19" stroke="#d2d2d2" stroke-width="1"/><path d="M0 43.5H19" stroke="#d2d2d2" stroke-width="1"/></svg>
<div class="a" style="left:55px;top:133px;width:19px;height:553px;overflow:hidden;"><span class="t" style="left:-12.2px;top:-6.9px;width:40px;height:13px;text-align:center;font-size:10.5px;line-height:13px;color:#d4d8dc;transform:rotate(-90deg);transform-origin:50% 50%">0</span><span class="t" style="left:-12.2px;top:39.27px;width:40px;height:13px;text-align:center;font-size:10.5px;line-height:13px;color:#d4d8dc;transform:rotate(-90deg);transform-origin:50% 50%">100</span><span class="t" style="left:-12.2px;top:85.44px;width:40px;height:13px;text-align:center;font-size:10.5px;line-height:13px;color:#d4d8dc;transform:rotate(-90deg);transform-origin:50% 50%">200</span><span class="t" style="left:-12.2px;top:131.61px;width:40px;height:13px;text-align:center;font-size:10.5px;line-height:13px;color:#d4d8dc;transform:rotate(-90deg);transform-origin:50% 50%">300</span><span class="t" style="left:-12.2px;top:177.78px;width:40px;height:13px;text-align:center;font-size:10.5px;line-height:13px;color:#d4d8dc;transform:rotate(-90deg);transform-origin:50% 50%">400</span><span class="t" style="left:-12.2px;top:223.95px;width:40px;height:13px;text-align:center;font-size:10.5px;line-height:13px;color:#d4d8dc;transform:rotate(-90deg);transform-origin:50% 50%">500</span><span class="t" style="left:-12.2px;top:270.12px;width:40px;height:13px;text-align:center;font-size:10.5px;line-height:13px;color:#d4d8dc;transform:rotate(-90deg);transform-origin:50% 50%">600</span><span class="t" style="left:-12.2px;top:316.29px;width:40px;height:13px;text-align:center;font-size:10.5px;line-height:13px;color:#d4d8dc;transform:rotate(-90deg);transform-origin:50% 50%">700</span><span class="t" style="left:-12.2px;top:362.46px;width:40px;height:13px;text-align:center;font-size:10.5px;line-height:13px;color:#d4d8dc;transform:rotate(-90deg);transform-origin:50% 50%">800</span><span class="t" style="left:-12.2px;top:408.63px;width:40px;height:13px;text-align:center;font-size:10.5px;line-height:13px;color:#d4d8dc;transform:rotate(-90deg);transform-origin:50% 50%">900</span><span class="t" style="left:-12.2px;top:454.8px;width:40px;height:13px;text-align:center;font-size:10.5px;line-height:13px;color:#d4d8dc;transform:rotate(-90deg);transform-origin:50% 50%">1000</span><span class="t" style="left:-12.2px;top:500.97px;width:40px;height:13px;text-align:center;font-size:10.5px;line-height:13px;color:#d4d8dc;transform:rotate(-90deg);transform-origin:50% 50%">1100</span></div>
<div class="a" style="left:74px;top:133px;width:1010px;height:553px;background:#808080;"></div>
<div class="a" style="left:210px;top:133px;width:737px;height:553px;background:#ffffff;"></div>
<div class="a" style="left:1084px;top:133px;width:14px;height:553px;background:#3b3b3b;"></div>
<div class="a" style="left:1085px;top:133.5px;width:12.5px;height:12.5px;background:#474747;border:1px solid #565656;"><svg width="11" height="11" style="position:absolute;left:0;top:0"><path d="M1.5 7h7.6l-3.8-3.8z" fill="#a8a8a8"/></svg></div>
<div class="a" style="left:1085px;top:673px;width:12.5px;height:12.5px;background:#474747;border:1px solid #565656;"><svg width="11" height="11" style="position:absolute;left:0;top:0"><path d="M1.5 3.6h7.6l-3.8 3.8z" fill="#a8a8a8"/></svg></div>
<div class="a" style="left:1086px;top:316px;width:12px;height:186.5px;background:#484848;border:1px solid #5a5a5a;"></div>
<div class="a" style="left:74px;top:686px;width:1010px;height:14px;background:#3b3b3b;"></div>
<div class="a" style="left:74.3px;top:687px;width:12.5px;height:12.5px;background:#474747;border:1px solid #565656;"><svg width="11" height="11" style="position:absolute;left:0;top:0"><path d="M7 1.5v7.6l-3.8-3.8z" fill="#a8a8a8"/></svg></div>
<div class="a" style="left:1071px;top:687px;width:12.5px;height:12.5px;background:#474747;border:1px solid #565656;"><svg width="11" height="11" style="position:absolute;left:0;top:0"><path d="M3.8 1.5v7.6l3.8-3.8z" fill="#a8a8a8"/></svg></div>
<div class="a" style="left:386px;top:687.5px;width:386px;height:12px;background:#484848;border:1px solid #5a5a5a;"></div>
<!-- p50_docker -->
<div class="a" style="left:1105px;top:82px;width:136px;height:22.5px;background:#494949;border:1px solid #5c5c5c;border-bottom:none;border-radius:3px 3px 0 0;"></div>
<div class="a" style="left:1242px;top:84.5px;width:80.5px;height:20px;background:#434343;border:1px solid #585858;border-bottom:none;border-radius:3px 3px 0 0;"></div>
<span class="t" style="left:1116px;top:86.25px;font-size:11.5px;line-height:15.5px;color:#d6d6d6;letter-spacing:-0.618px;"><u>A</u>dvanced Color Selector</span>
<span class="t" style="left:1253px;top:87.25px;font-size:11.5px;line-height:15.5px;color:#d6d6d6;letter-spacing:-0.452px;">Tool <u>O</u>ptions</span>
<span class="t" style="left:1108px;top:108.15px;font-size:11.5px;line-height:15.5px;color:#d6d6d6;letter-spacing:-0.661px;"><u>A</u>dvanced Color Selector</span>
<svg class="a" style="left:1339px;top:109px;" width="12" height="12" viewBox="0 0 12 12"><rect x="0.5" y="0.5" width="11" height="11" rx="1.5" fill="none" stroke="#848484"/><rect x="3.5" y="3.5" width="5" height="5" fill="none" stroke="#848484"/><path d="M0.5 3.5h3M8.5 3.5h3M3.5 0.5v3M3.5 8.5v3" stroke="#848484" stroke-width=".8" opacity=".6"/></svg><svg class="a" style="left:1353px;top:109px;" width="12" height="12" viewBox="0 0 12 12"><rect x="0.5" y="0.5" width="11" height="11" rx="1.5" fill="none" stroke="#848484"/><path d="M2 2l8 8M10 2l-8 8" stroke="#848484" stroke-width="1"/></svg>
<div class="a" style="left:1105px;top:125px;width:244px;height:191px;background:#808080;"></div>
<svg class="a" style="left:1115px;top:134.8px;" width="12" height="12" viewBox="0 0 13 13"><rect x="0.75" y="0.75" width="11.5" height="11.5" fill="none" stroke="#e0e0e0" stroke-width="1.5"/><path d="M0.75 2h11.5" stroke="#e0e0e0" stroke-width="2"/><path d="M3 5v5.5" stroke="#e0e0e0" stroke-width="1.6"/><path d="M5.5 6h5M5.5 9h5" stroke="#e0e0e0" stroke-width="1.3"/></svg>
<div class="a" style="left:1150px;top:125.8px;width:153.4px;height:153.4px;background:conic-gradient(from 270deg,#f00,#ff0,#0f0,#0ff,#00f,#f0f,#f00);border-radius:50%;-webkit-mask:radial-gradient(circle closest-side,transparent 64.1px,#000 65.1px,#000 76px,transparent 76.7px);mask:radial-gradient(circle closest-side,transparent 64.1px,#000 65.1px,#000 76px,transparent 76.7px);"></div>
<div class="a" style="left:1172.8px;top:138.8px;width:109.6px;height:95.2px;background:linear-gradient(180deg,#000,rgba(0,0,0,0)),conic-gradient(from 150.074deg at 50% 0%,color-mix(in srgb,#fff 0.00%,#ffc800) 0.000deg,color-mix(in srgb,#fff 14.12%,#ffc800) 7.482deg,color-mix(in srgb,#fff 26.79%,#ffc800) 14.963deg,color-mix(in srgb,#fff 38.59%,#ffc800) 22.445deg,color-mix(in srgb,#fff 50.00%,#ffc800) 29.926deg,color-mix(in srgb,#fff 61.41%,#ffc800) 37.408deg,color-mix(in srgb,#fff 73.21%,#ffc800) 44.889deg,color-mix(in srgb,#fff 85.88%,#ffc800) 52.371deg,color-mix(in srgb,#fff 100.00%,#ffc800) 59.852deg,#ffc800 360deg);clip-path:polygon(50% 0,0 100%,100% 100%);"></div>
<svg class="a" style="left:0px;top:0px;pointer-events:none;" width="1366" height="768" viewBox="0 0 1366 768"><path d="M1173.9 146.4L1182.2 155.2" stroke="#1a1a1a" stroke-width="1.2"/><path d="M1174.9 145.5L1183.2 154.3" stroke="#ffe9a0" stroke-width="1" opacity=".8"/><circle cx="1270.6" cy="230.7" r="5" fill="none" stroke="#e8e8e8" stroke-width="1" opacity=".7"/><circle cx="1270.6" cy="230.7" r="4.1" fill="#f7bb0c" stroke="#1a1a1a" stroke-width="1.1"/></svg>
<div class="a" style="left:1105px;top:281px;width:244px;height:10px;background:linear-gradient(90deg,#ff2020 0%,#ff8d18 30%,#ffbf10 50%,#f4f41a 68%,#b4f22a 90%,#8cf03c 100%);"></div>
<div class="a" style="left:1105px;top:292px;width:244px;height:10px;background:linear-gradient(90deg,#7c7252 0%,#c8a032 35%,#e8b428 50%,#ffc000 60%,#ffc000 100%);"></div>
<div class="a" style="left:1105px;top:303px;width:244px;height:10px;background:linear-gradient(90deg,#785800 0%,#d09a00 35%,#ffc41c 55%,#ffd970 80%,#ffeaa8 100%);"></div>
<div class="a" style="left:1223px;top:281px;width:9.5px;height:10px;background:#f9c01d;border:1px solid #55503c;"></div>
<div class="a" style="left:1223px;top:292px;width:9.5px;height:10px;background:#f9c01d;border:1px solid #55503c;"></div>
<div class="a" style="left:1223px;top:303px;width:9.5px;height:10px;background:#f9c01d;border:1px solid #55503c;"></div>
<div class="a" style="left:1105.5px;top:316.5px;width:15px;height:15px;background:#505050;border:1px solid #5e5e5e;border-radius:2px;"><svg width="13" height="13" viewBox="0 0 13 13" style="position:absolute;left:0;top:0"><path d="M2.2 6.5A4.3 4.3 0 0 1 9.8 3.8M10.8 6.5A4.3 4.3 0 0 1 3.2 9.2" stroke="#c8c8c8" stroke-width="1.2" fill="none"/><path d="M10.6 1.6v3.2H7.4z M2.4 11.4V8.2h3.2z" fill="#c8c8c8"/></svg></div>
<svg class="a" style="left:1228.2px;top:335px;" width="20" height="2" viewBox="0 0 20 2"><rect x="0" y="0" width="2" height="2" fill="#868686"/><rect x="3" y="0" width="2" height="2" fill="#868686"/><rect x="6" y="0" width="2" height="2" fill="#868686"/><rect x="9" y="0" width="2" height="2" fill="#868686"/><rect x="12" y="0" width="2" height="2" fill="#868686"/><rect x="15" y="0" width="2" height="2" fill="#868686"/></svg>
<span class="t" style="left:1108px;top:341.75px;font-size:11.5px;line-height:15.5px;color:#d6d6d6;letter-spacing:-0.836px;">La<u>y</u>ers</span>
<svg class="a" style="left:1339px;top:343px;" width="12" height="12" viewBox="0 0 12 12"><rect x="0.5" y="0.5" width="11" height="11" rx="1.5" fill="none" stroke="#848484"/><rect x="3.5" y="3.5" width="5" height="5" fill="none" stroke="#848484"/><path d="M0.5 3.5h3M8.5 3.5h3M3.5 0.5v3M3.5 8.5v3" stroke="#848484" stroke-width=".8" opacity=".6"/></svg><svg class="a" style="left:1353px;top:343px;" width="12" height="12" viewBox="0 0 12 12"><rect x="0.5" y="0.5" width="11" height="11" rx="1.5" fill="none" stroke="#848484"/><path d="M2 2l8 8M10 2l-8 8" stroke="#848484" stroke-width="1"/></svg>
<div class="a" style="left:1106px;top:359.5px;width:215.5px;height:20.5px;background:linear-gradient(180deg,#4f4f4f,#444444);border:1px solid #383838;border-radius:3px;box-shadow:inset 0 1px 0 rgba(255,255,255,.05);"></div>
<span class="t" style="left:1110.5px;top:362.75px;font-size:11.5px;line-height:15.5px;color:#d6d6d6;letter-spacing:-0.677px;">Normal</span>
<svg class="a" style="left:1306.5px;top:368px;" width="8" height="4.5" viewBox="0 0 8 4.5"><path d="M0 0h8l-4 4.5z" fill="#9a9a9a"/></svg>
<div class="a" style="left:1324px;top:359.5px;width:40.5px;height:20.5px;background:linear-gradient(180deg,#4f4f4f,#444444);border:1px solid #383838;border-radius:3px;box-shadow:inset 0 1px 0 rgba(255,255,255,.05);"></div>
<svg class="a" style="left:1328px;top:363px;" width="13" height="14" viewBox="0 0 13 14"><path d="M1 1h10.5L7.6 6.8V12.2L5 10.8V6.8Z" fill="none" stroke="#d6d6d6" stroke-width="1.3" stroke-linejoin="round"/></svg>
<svg class="a" style="left:1349.5px;top:368px;" width="8" height="4.5" viewBox="0 0 8 4.5"><path d="M0 0h8l-4 4.5z" fill="#9a9a9a"/></svg>
<div class="a" style="left:1105.5px;top:382.3px;width:227.5px;height:28.7px;background:#373737;border:1px solid #383838;border-radius:3px;"></div>
<div class="a" style="left:1106.5px;top:383.3px;width:212.3px;height:26.7px;background:#53728e;border-radius:2px 0 0 2px;"></div>
<div class="a" style="left:1318.8px;top:383.3px;width:13.2px;height:26.7px;background:#474747;border-radius:0 2px 2px 0;"><svg width="13" height="26" style="position:absolute;left:0;top:0"><path d="M2.5 9.5l4-4l4 4z" fill="#6a6a6a"/><path d="M2.5 16l4 4l4-4z" fill="#9a9a9a"/></svg></div>
<span class="t" style="left:1177px;top:390.25px;font-size:11.5px;line-height:15.5px;color:#e6e6e6;letter-spacing:-0.570px;">Opacity:  100%</span>
<div class="a" style="left:1335.5px;top:382.5px;width:29.5px;height:28.5px;background:linear-gradient(180deg,#4f4f4f,#444444);border:1px solid #383838;border-radius:3px;box-shadow:inset 0 1px 0 rgba(255,255,255,.05);"><svg width="28" height="26" style="position:absolute;left:0;top:0"><rect x="5.75" y="4.75" width="15.5" height="15.5" fill="none" stroke="#dcdcdc" stroke-width="1.5"/><path d="M5.5 6h16" stroke="#dcdcdc" stroke-width="2.5"/><path d="M9 9.5v8" stroke="#dcdcdc" stroke-width="2"/><path d="M12 11h7M12 15.5h7" stroke="#dcdcdc" stroke-width="1.6"/><path d="M22 20.5h4l-2 2.5z" fill="#dcdcdc"/></svg></div>
<svg class="a" style="left:1100.8px;top:384.5px;" width="2" height="18" viewBox="0 0 2 18"><rect x="0" y="0" width="2" height="2" fill="#868686"/><rect x="0" y="3" width="2" height="2" fill="#868686"/><rect x="0" y="6" width="2" height="2" fill="#868686"/><rect x="0" y="9" width="2" height="2" fill="#868686"/><rect x="0" y="12" width="2" height="2" fill="#868686"/><rect x="0" y="15" width="2" height="2" fill="#868686"/></svg>
<div class="a" style="left:1105px;top:412px;width:261px;height:257px;background:#373737;"></div>
<div class="a" style="left:1129px;top:413px;width:237px;height:26.5px;background:#53728e;"></div>
<div class="a" style="left:1155.5px;top:413px;width:1px;height:26.5px;background:#46627c;"></div>
<div class="a" style="left:1170px;top:413px;width:1px;height:26.5px;background:#46627c;"></div>
<div class="a" style="left:1306.5px;top:413px;width:1px;height:26.5px;background:#46627c;"></div>
<div class="a" style="left:1325.5px;top:413px;width:1px;height:26.5px;background:#46627c;"></div>
<div class="a" style="left:1344.5px;top:413px;width:1px;height:26.5px;background:#46627c;"></div>
<div class="a" style="left:1306.5px;top:440px;width:1px;height:26.5px;background:#3d3d3d;"></div>
<div class="a" style="left:1325.5px;top:440px;width:1px;height:26.5px;background:#3d3d3d;"></div>
<div class="a" style="left:1344.5px;top:440px;width:1px;height:26.5px;background:#3d3d3d;"></div>
<svg class="a" style="left:1108px;top:418.6px;" width="18" height="15" viewBox="0 0 18 15"><circle cx="9" cy="5.4" r="3.5" fill="#d2d2d2"/><path d="M2 6Q9 -2.4 16 6" fill="none" stroke="#d8d8d8" stroke-width="1.7"/><path d="M2.6 9.2Q9 16.6 15.4 9.2" fill="none" stroke="#d8d8d8" stroke-width="1.3"/></svg>
<div class="a" style="left:1131.5px;top:416.6px;width:20.8px;height:20.8px;background:#ffffff;overflow:hidden;outline:1px solid #2e3a46;"><svg width="20.8" height="20.8" style="position:absolute;left:0;top:0"><rect x="0" y="0" width="3" height="3" fill="#d8d8d8"/><rect x="0" y="6" width="3" height="3" fill="#d8d8d8"/><rect x="0" y="12" width="3" height="3" fill="#d8d8d8"/><rect x="0" y="18" width="3" height="3" fill="#d8d8d8"/><rect x="3" y="3" width="3" height="3" fill="#d8d8d8"/><rect x="3" y="9" width="3" height="3" fill="#d8d8d8"/><rect x="3" y="15" width="3" height="3" fill="#d8d8d8"/><rect x="6" y="0" width="3" height="3" fill="#d8d8d8"/><rect x="6" y="6" width="3" height="3" fill="#d8d8d8"/><rect x="6" y="12" width="3" height="3" fill="#d8d8d8"/><rect x="6" y="18" width="3" height="3" fill="#d8d8d8"/><rect x="9" y="3" width="3" height="3" fill="#d8d8d8"/><rect x="9" y="9" width="3" height="3" fill="#d8d8d8"/><rect x="9" y="15" width="3" height="3" fill="#d8d8d8"/><rect x="12" y="0" width="3" height="3" fill="#d8d8d8"/><rect x="12" y="6" width="3" height="3" fill="#d8d8d8"/><rect x="12" y="12" width="3" height="3" fill="#d8d8d8"/><rect x="12" y="18" width="3" height="3" fill="#d8d8d8"/><rect x="15" y="3" width="3" height="3" fill="#d8d8d8"/><rect x="15" y="9" width="3" height="3" fill="#d8d8d8"/><rect x="15" y="15" width="3" height="3" fill="#d8d8d8"/><rect x="18" y="0" width="3" height="3" fill="#d8d8d8"/><rect x="18" y="6" width="3" height="3" fill="#d8d8d8"/><rect x="18" y="12" width="3" height="3" fill="#d8d8d8"/><rect x="18" y="18" width="3" height="3" fill="#d8d8d8"/></svg></div>
<svg class="a" style="left:1157.6px;top:414.6px;" width="11" height="11" viewBox="0 0 11 11"><path d="M3.4 1H10.2V7.4L7.6 10H2.8V7" fill="none" stroke="#e6e6e6" stroke-width="1.1"/><path d="M0.6 2.4L6.2 7.2" fill="none" stroke="#e6e6e6" stroke-width="1.3"/></svg>
<svg class="a" style="left:1310px;top:420px;" width="12" height="12" viewBox="0 0 12 12"><rect x="1" y="5.5" width="8.5" height="6" fill="#7390ab"/><path d="M6.5 5.5V3.2A2.2 2.2 0 0 1 10.9 3.2V4.2" fill="none" stroke="#7390ab" stroke-width="1.3"/></svg>
<span class="t" style="left:1326.5px;top:415.5px;font-size:21px;line-height:16px;font-style:italic;color:#7390ab;font-family:'DejaVu Sans','Liberation Sans',sans-serif">α</span>
<svg class="a" style="left:1346.5px;top:419.5px;" width="14" height="14" viewBox="0 0 14 14"><rect x="0" y="0" width="3.6" height="3.6" fill="#7e9ab4"/><rect x="0" y="3.5" width="3.6" height="3.6" fill="#5f7f9d"/><rect x="0" y="7" width="3.6" height="3.6" fill="#7e9ab4"/><rect x="0" y="10.5" width="3.6" height="3.6" fill="#5f7f9d"/><rect x="3.5" y="0" width="3.6" height="3.6" fill="#5f7f9d"/><rect x="3.5" y="3.5" width="3.6" height="3.6" fill="#7e9ab4"/><rect x="3.5" y="7" width="3.6" height="3.6" fill="#5f7f9d"/><rect x="3.5" y="10.5" width="3.6" height="3.6" fill="#7e9ab4"/><rect x="7" y="0" width="3.6" height="3.6" fill="#7e9ab4"/><rect x="7" y="3.5" width="3.6" height="3.6" fill="#5f7f9d"/><rect x="7" y="7" width="3.6" height="3.6" fill="#7e9ab4"/><rect x="7" y="10.5" width="3.6" height="3.6" fill="#5f7f9d"/><rect x="10.5" y="0" width="3.6" height="3.6" fill="#5f7f9d"/><rect x="10.5" y="3.5" width="3.6" height="3.6" fill="#7e9ab4"/><rect x="10.5" y="7" width="3.6" height="3.6" fill="#5f7f9d"/><rect x="10.5" y="10.5" width="3.6" height="3.6" fill="#7e9ab4"/></svg>
<svg class="a" style="left:1108px;top:445.6px;" width="18" height="15" viewBox="0 0 18 15"><circle cx="9" cy="5.4" r="3.5" fill="#d2d2d2"/><path d="M2 6Q9 -2.4 16 6" fill="none" stroke="#d8d8d8" stroke-width="1.7"/><path d="M2.6 9.2Q9 16.6 15.4 9.2" fill="none" stroke="#d8d8d8" stroke-width="1.3"/></svg>
<div class="a" style="left:1131.5px;top:443.6px;width:20.8px;height:20.8px;background:#ffffff;overflow:hidden;"><svg width="20.8" height="20.8" style="position:absolute;left:0;top:0"><rect x="0" y="0" width="3" height="3" fill="#d8d8d8"/><rect x="0" y="6" width="3" height="3" fill="#d8d8d8"/><rect x="0" y="12" width="3" height="3" fill="#d8d8d8"/><rect x="0" y="18" width="3" height="3" fill="#d8d8d8"/><rect x="3" y="3" width="3" height="3" fill="#d8d8d8"/><rect x="3" y="9" width="3" height="3" fill="#d8d8d8"/><rect x="3" y="15" width="3" height="3" fill="#d8d8d8"/><rect x="6" y="0" width="3" height="3" fill="#d8d8d8"/><rect x="6" y="6" width="3" height="3" fill="#d8d8d8"/><rect x="6" y="12" width="3" height="3" fill="#d8d8d8"/><rect x="6" y="18" width="3" height="3" fill="#d8d8d8"/><rect x="9" y="3" width="3" height="3" fill="#d8d8d8"/><rect x="9" y="9" width="3" height="3" fill="#d8d8d8"/><rect x="9" y="15" width="3" height="3" fill="#d8d8d8"/><rect x="12" y="0" width="3" height="3" fill="#d8d8d8"/><rect x="12" y="6" width="3" height="3" fill="#d8d8d8"/><rect x="12" y="12" width="3" height="3" fill="#d8d8d8"/><rect x="12" y="18" width="3" height="3" fill="#d8d8d8"/><rect x="15" y="3" width="3" height="3" fill="#d8d8d8"/><rect x="15" y="9" width="3" height="3" fill="#d8d8d8"/><rect x="15" y="15" width="3" height="3" fill="#d8d8d8"/><rect x="18" y="0" width="3" height="3" fill="#d8d8d8"/><rect x="18" y="6" width="3" height="3" fill="#d8d8d8"/><rect x="18" y="12" width="3" height="3" fill="#d8d8d8"/><rect x="18" y="18" width="3" height="3" fill="#d8d8d8"/></svg></div>
<svg class="a" style="left:1157.6px;top:441.6px;" width="11" height="11" viewBox="0 0 11 11"><path d="M3.4 1H10.2V7.4L7.6 10H2.8V7" fill="none" stroke="#e6e6e6" stroke-width="1.1"/><path d="M0.6 2.4L6.2 7.2" fill="none" stroke="#e6e6e6" stroke-width="1.3"/></svg>
<svg class="a" style="left:1310px;top:447px;" width="12" height="12" viewBox="0 0 12 12"><rect x="1" y="5.5" width="8.5" height="6" fill="#585858"/><path d="M6.5 5.5V3.2A2.2 2.2 0 0 1 10.9 3.2V4.2" fill="none" stroke="#585858" stroke-width="1.3"/></svg>
<span class="t" style="left:1326.5px;top:442.5px;font-size:21px;line-height:16px;font-style:italic;color:#585858;font-family:'DejaVu Sans','Liberation Sans',sans-serif">α</span>
<svg class="a" style="left:1346.5px;top:446.5px;" width="14" height="14" viewBox="0 0 14 14"><rect x="0" y="0" width="3.6" height="3.6" fill="#626262"/><rect x="0" y="3.5" width="3.6" height="3.6" fill="#4a4a4a"/><rect x="0" y="7" width="3.6" height="3.6" fill="#626262"/><rect x="0" y="10.5" width="3.6" height="3.6" fill="#4a4a4a"/><rect x="3.5" y="0" width="3.6" height="3.6" fill="#4a4a4a"/><rect x="3.5" y="3.5" width="3.6" height="3.6" fill="#626262"/><rect x="3.5" y="7" width="3.6" height="3.6" fill="#4a4a4a"/><rect x="3.5" y="10.5" width="3.6" height="3.6" fill="#626262"/><rect x="7" y="0" width="3.6" height="3.6" fill="#626262"/><rect x="7" y="3.5" width="3.6" height="3.6" fill="#4a4a4a"/><rect x="7" y="7" width="3.6" height="3.6" fill="#626262"/><rect x="7" y="10.5" width="3.6" height="3.6" fill="#4a4a4a"/><rect x="10.5" y="0" width="3.6" height="3.6" fill="#4a4a4a"/><rect x="10.5" y="3.5" width="3.6" height="3.6" fill="#626262"/><rect x="10.5" y="7" width="3.6" height="3.6" fill="#4a4a4a"/><rect x="10.5" y="10.5" width="3.6" height="3.6" fill="#626262"/></svg>
<span class="t" style="left:1172.5px;top:419.25px;font-size:11.5px;line-height:15.5px;color:#dcdcdc;letter-spacing:-0.391px;font-weight:bold;">Paint Layer 1</span>
<span class="t" style="left:1172.5px;top:445.75px;font-size:11.5px;line-height:15.5px;color:#d6d6d6;letter-spacing:-0.510px;">background</span>
<svg class="a" style="left:1109px;top:676px;" width="17" height="17" viewBox="0 0 17 17"><rect x="1" y="1" width="14.5" height="14.5" fill="none" stroke="#d6d6d6" stroke-width="1.6"/><path d="M8.25 4.5v7.5M4.5 8.25h7.5" stroke="#d6d6d6" stroke-width="1.8"/></svg>
<svg class="a" style="left:1131.5px;top:682px;" width="7" height="4" viewBox="0 0 7 4"><path d="M0 0h7l-3.5 4z" fill="#8a8a8a"/></svg>
<svg class="a" style="left:1150px;top:676px;" width="17" height="17" viewBox="0 0 17 17"><rect x="5.5" y="1" width="10.5" height="10.5" fill="none" stroke="#d6d6d6" stroke-width="1.6"/><path d="M2 5V15H12" fill="none" stroke="#d6d6d6" stroke-width="1.6"/></svg>
<svg class="a" style="left:1182px;top:679px;" width="17" height="11" viewBox="0 0 17 11"><path d="M1 1.5L8.5 9L16 1.5" fill="none" stroke="#d6d6d6" stroke-width="1.7"/></svg>
<svg class="a" style="left:1213px;top:679px;" width="17" height="11" viewBox="0 0 17 11"><path d="M1 9.5L8.5 2L16 9.5" fill="none" stroke="#d6d6d6" stroke-width="1.7"/></svg>
<svg class="a" style="left:1245px;top:676px;" width="18" height="17" viewBox="0 0 18 17"><path d="M0 3h18M0 8.5h18M0 14h18" stroke="#d6d6d6" stroke-width="1.5"/><path d="M11.5 0.5v5M5.5 6v5M10.5 11.5v5" stroke="#d6d6d6" stroke-width="2"/></svg>
<svg class="a" style="left:1342px;top:676px;" width="16" height="17" viewBox="0 0 16 17"><path d="M1 3.5h13.5" stroke="#d6d6d6" stroke-width="1.8"/><path d="M5 3V1.3h5.5V3" fill="none" stroke="#d6d6d6" stroke-width="1.4"/><path d="M2 5.5h11.5l-1 10.5h-9.5z" fill="#d6d6d6"/></svg>
<!-- p60_dialog -->
<div class="a" style="left:420px;top:58px;width:547px;height:582px;background:#494949;box-shadow:0 5px 16px 0 rgba(0,0,0,.32),0 0 5px rgba(0,0,0,.12);border:1px solid #744da9;"></div>
<div class="a" style="left:420px;top:58px;width:547px;height:30.5px;background:#744da9;"></div>
<div class="a" style="left:428.2px;top:63.2px;width:16px;height:16px;"><div class="a" style="left:2.5px;top:3px;width:13px;height:13px;border-radius:50%;background:radial-gradient(circle at 48% 55%,rgba(255,255,255,.8) 0,rgba(255,255,255,.35) 38%,rgba(255,255,255,0) 68%),conic-gradient(from 0deg,#ff3cff 0deg,#ff8ee0 55deg,#ffee60 105deg,#f4ff58 130deg,#58ffb0 175deg,#3cf0ff 225deg,#8cc4ff 285deg,#e07cff 335deg,#ff3cff 360deg);"></div><svg class="a" style="left:0;top:0" width="16" height="16" viewBox="0 0 16 16"><path d="M1.98 3.26L10.12 8.24L8.68 10.16L1.62 3.74Z" fill="#353538"/><path d="M10.12 8.24L10.9 8.9L9.5 10.8L8.68 10.16Z" fill="#c9c9d2"/><ellipse cx="11.5" cy="11.4" rx="2" ry="1.35" transform="rotate(52 11.5 11.4)" fill="#16161c"/></svg></div>
<span class="t" style="left:451px;top:65.5px;font-size:12px;line-height:16px;color:#ffffff;letter-spacing:-0.235px;">Krita</span>
<svg class="a" style="left:945px;top:67px;" width="12" height="12" viewBox="0 0 12 12"><path d="M0.7 0.7L11.3 11.3M11.3 0.7L0.7 11.3" stroke="#fff" stroke-width="1.2"/></svg>
<span class="t" style="left:440px;top:113.75px;font-size:11.5px;line-height:15.5px;color:#d6d6d6;letter-spacing:-0.374px;">Docker:</span>
<div class="a" style="left:484px;top:109.5px;width:146.5px;height:29px;background:linear-gradient(180deg,#4f4f4f,#444444);border:1px solid #383838;border-radius:3px;box-shadow:inset 0 1px 0 rgba(255,255,255,.05);"></div>
<span class="t" style="left:488.5px;top:117.85px;font-size:11.5px;line-height:15.5px;color:#d6d6d6;letter-spacing:-0.422px;">Advanced Color Selector</span>
<svg class="a" style="left:615.5px;top:122px;" width="8" height="5" viewBox="0 0 8 5"><path d="M0 0h8l-4 4.5z" fill="#9a9a9a"/></svg>
<div class="a" style="left:441px;top:188.5px;width:504.5px;height:365.5px;background:#494949;border:1px solid #3a3a3a;box-shadow:inset 1px 1px 0 rgba(255,255,255,.04);"></div>
<div class="a" style="left:442px;top:165.5px;width:90.5px;height:24px;background:#494949;border:1px solid #5a5a5a;border-bottom:none;border-radius:3px 3px 0 0;"></div>
<div class="a" style="left:534px;top:168px;width:63.5px;height:20.5px;background:#434343;border:1px solid #575757;border-bottom:none;border-radius:3px 3px 0 0;"></div>
<span class="t" style="left:542.5px;top:171.85px;font-size:11.5px;line-height:15.5px;color:#d6d6d6;letter-spacing:-0.361px;"><u>B</u>ehavior</span>
<div class="a" style="left:599px;top:168px;width:95px;height:20.5px;background:#434343;border:1px solid #575757;border-bottom:none;border-radius:3px 3px 0 0;"></div>
<span class="t" style="left:609px;top:171.85px;font-size:11.5px;line-height:15.5px;color:#d6d6d6;letter-spacing:-0.474px;"><u>S</u>hade Selector</span>
<div class="a" style="left:695.5px;top:168px;width:84.5px;height:20.5px;background:#434343;border:1px solid #575757;border-bottom:none;border-radius:3px 3px 0 0;"></div>
<span class="t" style="left:705px;top:171.85px;font-size:11.5px;line-height:15.5px;color:#d6d6d6;letter-spacing:-0.304px;">Color <u>H</u>istory</span>
<div class="a" style="left:781.5px;top:168px;width:110px;height:20.5px;background:#434343;border:1px solid #575757;border-bottom:none;border-radius:3px 3px 0 0;"></div>
<span class="t" style="left:791px;top:171.85px;font-size:11.5px;line-height:15.5px;color:#d6d6d6;letter-spacing:-0.358px;">Colors <u>f</u>rom Image</span>
<span class="t" style="left:452px;top:170.85px;font-size:11.5px;line-height:15.5px;color:#d6d6d6;letter-spacing:-0.383px;">Color S<u>e</u>lector</span>
<div class="a" style="left:453px;top:199.5px;width:13.5px;height:13.5px;background:#3d3d3d;border-radius:2px;"><svg width="14" height="14" style="position:absolute;left:0;top:0"><path d="M3.2 6.2L5.8 11.2L10.8 1.8" stroke="#c6c6c6" stroke-width="1.7" fill="none"/></svg></div>
<span class="t" style="left:470px;top:199.75px;font-size:11.5px;line-height:15.5px;color:#d6d6d6;letter-spacing:-0.360px;">Sho<u>w</u> color selector</span>
<div class="a" style="left:452.8px;top:217.5px;width:482.2px;height:147.5px;border:1px solid #3f3f3f;border-radius:2px;box-shadow:inset 1px 1px 0 rgba(255,255,255,.05),1px 1px 0 rgba(255,255,255,.04);"></div>
<div class="a" style="left:452.8px;top:389.3px;width:482.2px;height:147.7px;border:1px solid #3f3f3f;border-radius:2px;box-shadow:inset 1px 1px 0 rgba(255,255,255,.05),1px 1px 0 rgba(255,255,255,.04);"></div>
<div class="a" style="left:452.5px;top:371px;width:11.5px;height:13.5px;background:#3a3a3a;border-radius:2px;"></div>
<span class="t" style="left:472.5px;top:470.75px;font-size:11.5px;line-height:15.5px;color:#8c8c8c;letter-spacing:-0.286px;">Prof<u>i</u>le:</span>
<div class="a" style="left:513.5px;top:468.5px;width:365px;height:19px;background:#474747;border:1px solid #383838;border-radius:3px;box-shadow:inset 0 1px 0 rgba(255,255,255,.05);"></div>
<span class="t" style="left:517.5px;top:470.75px;font-size:11.5px;line-height:15.5px;color:#8c8c8c;letter-spacing:-0.297px;">Chemical proof (Default)</span>
<svg class="a" style="left:865px;top:476px;" width="8" height="5" viewBox="0 0 8 5"><path d="M0 0h8l-4 4.5z" fill="#707070"/></svg>
<div class="a" style="left:887px;top:467.5px;width:25.5px;height:21px;background:linear-gradient(180deg,#4f4f4f,#444444);border:1px solid #383838;border-radius:3px;box-shadow:inset 0 1px 0 rgba(255,255,255,.05);"><svg width="24" height="19" style="position:absolute;left:0;top:-1.2px"><path d="M6.5 14.5V4.5H10L11 6H17.5V14.5Z" fill="none" stroke="#d0d0d0" stroke-width="1.3"/><path d="M6.5 4.5H10L11 6H17.5V7.5H6.5Z" fill="#d0d0d0"/></svg></div>
<div class="a" style="left:473.5px;top:496px;width:440px;height:19.3px;background:#474747;border:1px solid #383838;border-radius:3px;box-shadow:inset 0 1px 0 rgba(255,255,255,.05);"></div>
<span class="t" style="left:643px;top:498.75px;font-size:11.5px;line-height:15.5px;color:#8c8c8c;letter-spacing:-0.482px;">Color Sp<u>a</u>ce Browser</span>
<div class="a" style="left:432.5px;top:607px;width:88px;height:20.5px;background:linear-gradient(180deg,#4f4f4f,#444444);border:1px solid #383838;border-radius:3px;box-shadow:inset 0 1px 0 rgba(255,255,255,.05);"></div>
<span class="t" style="left:436px;top:610.85px;font-size:11.5px;line-height:15.5px;color:#d6d6d6;letter-spacing:-0.322px;"><u>R</u>estore Defaults</span>
<div class="a" style="left:789.5px;top:607px;width:79px;height:20.5px;background:linear-gradient(180deg,#4b5056,#454a50);border:1px solid #4f6e8b;border-radius:3px;box-shadow:inset 0 1px 0 rgba(255,255,255,.05);"></div>
<span class="t" style="left:822px;top:610.85px;font-size:11.5px;line-height:15.5px;color:#d6d6d6;letter-spacing:-1.558px;"><u>O</u>K</span>
<div class="a" style="left:875.5px;top:607px;width:79px;height:20.5px;background:linear-gradient(180deg,#4f4f4f,#444444);border:1px solid #383838;border-radius:3px;box-shadow:inset 0 1px 0 rgba(255,255,255,.05);"></div>
<span class="t" style="left:898px;top:610.85px;font-size:11.5px;line-height:15.5px;color:#d6d6d6;letter-spacing:-0.466px;">Ca<u>n</u>cel</span>
<div class="a" style="left:464px;top:228px;width:602.3px;height:241.7px;background:#808080;box-shadow:2px 2.5px 2px -0.5px rgba(0,0,0,.5);"></div>
<div class="a" style="left:824.5px;top:349px;width:120px;height:121px;background:#53728e;"></div>
<div class="a" style="left:475.3px;top:239.3px;width:100px;height:100px;background:conic-gradient(from 270deg,#f00,#ff0,#0f0,#0ff,#00f,#f0f,#f00);border-radius:50%;-webkit-mask:radial-gradient(circle closest-side,transparent 40.7px,#000 41.7px,#000 49.2px,transparent 50px);mask:radial-gradient(circle closest-side,transparent 40.7px,#000 41.7px,#000 49.2px,transparent 50px);"></div>
<div class="a" style="left:490.6px;top:248.6px;width:70px;height:61.3px;background:linear-gradient(180deg,#000,rgba(0,0,0,0)),conic-gradient(from 150.275deg at 50% 0%,color-mix(in srgb,#fff 0.00%,#f00) 0.000deg,color-mix(in srgb,#fff 14.10%,#f00) 7.431deg,color-mix(in srgb,#fff 26.76%,#f00) 14.862deg,color-mix(in srgb,#fff 38.58%,#f00) 22.294deg,color-mix(in srgb,#fff 50.00%,#f00) 29.725deg,color-mix(in srgb,#fff 61.42%,#f00) 37.156deg,color-mix(in srgb,#fff 73.24%,#f00) 44.587deg,color-mix(in srgb,#fff 85.90%,#f00) 52.018deg,color-mix(in srgb,#fff 100.00%,#f00) 59.449deg,#f00 360deg);clip-path:polygon(50% 0,0 100%,100% 100%);"></div>
<div class="a" style="left:595.3px;top:239.3px;width:100px;height:100px;background:conic-gradient(from 270deg,#f00,#ff0,#0f0,#0ff,#00f,#f0f,#f00);border-radius:50%;-webkit-mask:radial-gradient(circle closest-side,transparent 40.7px,#000 41.7px,#000 49.2px,transparent 50px);mask:radial-gradient(circle closest-side,transparent 40.7px,#000 41.7px,#000 49.2px,transparent 50px);"></div>
<div class="a" style="left:616px;top:259.5px;width:59px;height:59px;background:linear-gradient(180deg,rgba(0,0,0,0),#000),linear-gradient(90deg,#fff,#f00);"></div>
<div class="a" style="left:715.3px;top:239.3px;width:100px;height:100px;background:conic-gradient(from 270deg,#f00,#ff0,#0f0,#0ff,#00f,#f0f,#f00);border-radius:50%;-webkit-mask:radial-gradient(circle closest-side,transparent 40.7px,#000 41.7px,#000 49.2px,transparent 50px);mask:radial-gradient(circle closest-side,transparent 40.7px,#000 41.7px,#000 49.2px,transparent 50px);"></div>
<div class="a" style="left:736px;top:259.5px;width:59px;height:59px;isolation:isolate;background:linear-gradient(90deg,rgb(0,0,0) 0%,rgb(26,23,23) 10%,rgb(51,41,41) 20%,rgb(76,54,54) 30%,rgb(102,61,61) 40%,rgb(128,64,64) 50%,rgb(153,61,61) 60%,rgb(178,54,54) 70%,rgb(204,41,41) 80%,rgb(230,23,23) 90%,rgb(255,0,0) 100%);"><div class="a" style="left:0;top:0;width:100%;height:100%;mix-blend-mode:plus-lighter;background:linear-gradient(180deg,rgba(0,0,0,0),#000),linear-gradient(90deg,rgb(255,255,255) 0%,rgb(230,207,207) 10%,rgb(204,163,163) 20%,rgb(178,125,125) 30%,rgb(153,92,92) 40%,rgb(128,64,64) 50%,rgb(102,41,41) 60%,rgb(77,23,23) 70%,rgb(51,10,10) 80%,rgb(25,3,3) 90%,rgb(0,0,0) 100%);"></div></div>
<div class="a" style="left:835px;top:239px;width:100px;height:10px;background:linear-gradient(90deg,#fff,#f00);"></div>
<div class="a" style="left:841px;top:250px;width:88px;height:88px;border-radius:50%;background:radial-gradient(circle closest-side,#000 0,rgba(0,0,0,0) 100%),conic-gradient(from 270deg,#f00,#ff0,#0f0,#0ff,#00f,#f0f,#f00);"></div>
<div class="a" style="left:955px;top:239px;width:100px;height:10px;background:linear-gradient(90deg,#000,#f00);"></div>
<div class="a" style="left:961px;top:250px;width:88px;height:88px;border-radius:50%;background:radial-gradient(circle closest-side,#fff 0,rgba(255,255,255,0) 100%),conic-gradient(from 270deg,#f00,#ff0,#0f0,#0ff,#00f,#f0f,#f00);"></div>
<div class="a" style="left:475px;top:359px;width:100px;height:10px;background:linear-gradient(90deg,#f00,#ff0,#0f0,#0ff,#00f,#f0f,#f00);"></div>
<div class="a" style="left:475px;top:369px;width:100px;height:90px;isolation:isolate;background:linear-gradient(90deg,rgb(0,0,0) 0%,rgb(26,23,23) 10%,rgb(51,41,41) 20%,rgb(76,54,54) 30%,rgb(102,61,61) 40%,rgb(128,64,64) 50%,rgb(153,61,61) 60%,rgb(178,54,54) 70%,rgb(204,41,41) 80%,rgb(230,23,23) 90%,rgb(255,0,0) 100%);"><div class="a" style="left:0;top:0;width:100%;height:100%;mix-blend-mode:plus-lighter;background:linear-gradient(180deg,rgba(0,0,0,0),#000),linear-gradient(90deg,rgb(255,255,255) 0%,rgb(230,207,207) 10%,rgb(204,163,163) 20%,rgb(178,125,125) 30%,rgb(153,92,92) 40%,rgb(128,64,64) 50%,rgb(102,41,41) 60%,rgb(77,23,23) 70%,rgb(51,10,10) 80%,rgb(25,3,3) 90%,rgb(0,0,0) 100%);"></div></div>
<div class="a" style="left:595px;top:359px;width:100px;height:10px;background:linear-gradient(90deg,#f00,#ff0,#0f0,#0ff,#00f,#f0f,#f00);"></div>
<div class="a" style="left:595px;top:369px;width:100px;height:90px;background:linear-gradient(180deg,rgba(0,0,0,0),#000),linear-gradient(90deg,#fff,#f00);"></div>
<div class="a" style="left:715px;top:359px;width:100px;height:10px;background:linear-gradient(90deg,#fff,#f00);"></div>
<div class="a" style="left:715px;top:369px;width:100px;height:90px;background:linear-gradient(180deg,rgba(0,0,0,0),#000),linear-gradient(90deg,#f00,#ff0,#0f0,#0ff,#00f,#f0f,#f00);"></div>
<div class="a" style="left:835px;top:359px;width:100px;height:10px;background:linear-gradient(90deg,#000,#f00);"></div>
<div class="a" style="left:835px;top:369px;width:100px;height:90px;background:linear-gradient(180deg,rgba(255,255,255,0),#fff),linear-gradient(90deg,#f00,#ff0,#0f0,#0ff,#00f,#f0f,#f00);"></div>
<!-- p70_status -->
<div class="a" style="left:7px;top:706px;width:15px;height:15px;border:1px solid #c2c2c2;"><svg width="13" height="13" style="position:absolute;left:0;top:0"><circle cx="6.5" cy="6.5" r="3.4" fill="none" stroke="#e4e4e4" stroke-width="1.2" stroke-dasharray="1 1.14"/></svg></div>
<span class="t" style="left:35.5px;top:707.95px;font-size:11.5px;line-height:15.5px;color:#d2d2d2;letter-spacing:-0.393px;">m) RGBA 05 Impasto-details</span>
<span class="t" style="left:289px;top:707.95px;font-size:11.5px;line-height:15.5px;color:#d2d2d2;letter-spacing:-0.396px;">RGB/Alpha (8-bit integer/channel)</span>
<span class="t" style="left:457.5px;top:707.95px;font-size:11.5px;line-height:15.5px;color:#d2d2d2;letter-spacing:-0.459px;">sRGB-elle-V2-srgbtrc.icc</span>
<div class="a" style="left:893px;top:704px;width:120px;height:21px;border:1px solid #404040;border-radius:2px;box-shadow:inset 1px 1px 0 rgba(255,255,255,.03);"></div>
<span class="t" style="left:906px;top:707.95px;font-size:11.5px;line-height:15.5px;color:#d2d2d2;letter-spacing:-0.200px;">1,600 <u>x</u> 1,200 (0 B)</span>
<svg class="a" style="left:1130px;top:706px;" width="14" height="15" viewBox="0 0 14 15"><path d="M3.5 4.5A5 5 0 1 1 3.2 11.5" fill="none" stroke="#9a9a9a" stroke-width="1.2"/><path d="M1 3.5L4.8 1V6Z" fill="#9a9a9a"/><rect x="4" y="6.5" width="5" height="5" fill="none" stroke="#9a9a9a" stroke-width="1"/></svg>
<span class="t" style="left:1217.5px;top:707.45px;font-size:11.5px;line-height:15.5px;color:#d2d2d2;letter-spacing:0.328px;">46%</span>
<div class="a" style="left:1258px;top:712.5px;width:82px;height:4px;background:#3a3a3a;border-radius:2px;border:1px solid #353535;"></div>
<div class="a" style="left:1258px;top:712.5px;width:17px;height:4px;background:#5a7a9a;border-radius:2px;"></div>
<div class="a" style="left:1273.5px;top:708.5px;width:11.5px;height:12px;background:#505050;border:1px solid #3a3a3a;border-radius:2px;box-shadow:inset 0 1px 0 rgba(255,255,255,.08);"></div>
<div class="a" style="left:1342px;top:703.5px;width:21.5px;height:21px;background:#454545;border:1px solid #383838;border-radius:2px;"><div class="a" style="left:4px;top:3px;width:12px;height:13px;background:#e8eef4;"></div><svg width="20" height="19" style="position:absolute;left:0;top:0"><circle cx="10" cy="9.5" r="3.4" fill="#4a90d8"/><circle cx="10" cy="9.5" r="1.5" fill="#e6d85a"/><path d="M5.5 5l2 2M14.5 5l-2 2M5.5 14l2-2M14.5 14l-2-2" stroke="#e0c040" stroke-width="1.2"/></svg></div>
<div class="a" style="left:0px;top:728px;width:1366px;height:40px;background:#efe7da;"></div>
<svg class="a" style="left:16px;top:740px;" width="16" height="16" viewBox="0 0 16 16"><path d="M0 2.3L6.6 1.4V7.6H0Z M7.4 1.3L16 0V7.6H7.4Z M0 8.4H6.6V14.6L0 13.7Z M7.4 8.4H16V16L7.4 14.7Z" fill="#1a1a1a"/></svg>
<div class="a" style="left:48px;top:729px;width:343.5px;height:39px;background:#ffffff;border:1px solid #c9c2b6;border-bottom:none;"></div>
<svg class="a" style="left:59px;top:740px;" width="17" height="17" viewBox="0 0 17 17"><circle cx="10" cy="6.5" r="5.2" fill="none" stroke="#222" stroke-width="1.4"/><path d="M6.3 10.3L1 15.8" stroke="#222" stroke-width="1.5"/></svg>
<span class="t" style="left:87.5px;top:738px;font-size:15px;line-height:20px;color:#3c3c3c;letter-spacing:-0.214px;">Type here to search</span>
<svg class="a" style="left:407.5px;top:739.5px;" width="17" height="16" viewBox="0 0 17 16"><path d="M1 2.4V1H11.5V2.4M1 13.8V15.2H11.5V13.8" fill="none" stroke="#1a1a1a" stroke-width="1.3"/><rect x="1" y="4.6" width="10.5" height="7" fill="none" stroke="#1a1a1a" stroke-width="1.3"/><path d="M15.1 0.4V2.6M15.1 8.4V15.8" stroke="#1a1a1a" stroke-width="1.5"/><rect x="14" y="3.8" width="2.4" height="2.6" fill="#1a1a1a"/></svg>
<svg class="a" style="left:454.5px;top:735px;" width="25" height="26" viewBox="0 0 25 26"><rect x="18.2" y="0.8" width="4.4" height="3.4" rx="1" transform="rotate(42 20.4 2.5)" fill="#4d545c"/><path d="M0.5 23V13A12 12 0 0 1 24.5 13V23Q24.5 25.2 22.3 25.2H2.7Q0.5 25.2 0.5 23Z" fill="#6e7781"/><circle cx="12.4" cy="12.8" r="7" fill="#f6f6f6"/><path d="M12.4 12.8L8.2 9.2M12.4 12.8L17 8.6" stroke="#1c1c1c" stroke-width="1.9" stroke-linecap="round"/><path d="M12.4 13.4V19.6" stroke="#e8421a" stroke-width="1.5"/><circle cx="12.4" cy="12.8" r="1.5" fill="#1c1c1c"/></svg>
<svg class="a" style="left:507px;top:735.8px;" width="19" height="25" viewBox="0 0 19 25"><rect x="0.2" y="0.2" width="18" height="24" rx="1.6" fill="#727c87"/><rect x="2.4" y="2.2" width="13.6" height="4.6" fill="#4fc4f2"/><rect x="2.7" y="9.2" width="3.5" height="3.5" fill="#dde5ea"/><rect x="2.7" y="13.9" width="3.5" height="3.5" fill="#dde5ea"/><rect x="2.7" y="18.6" width="3.5" height="3.5" fill="#dde5ea"/><rect x="7.3" y="9.2" width="3.5" height="3.5" fill="#dde5ea"/><rect x="7.3" y="13.9" width="3.5" height="3.5" fill="#dde5ea"/><rect x="7.3" y="18.6" width="3.5" height="3.5" fill="#dde5ea"/><rect x="11.9" y="9.2" width="3.5" height="3.5" fill="#dde5ea"/><rect x="11.9" y="13.9" width="3.5" height="8.2" fill="#0d5aa7"/></svg>
<svg class="a" style="left:553.5px;top:738.5px;" width="23" height="19" viewBox="0 0 23 19"><path d="M0.5 1.6Q0.5 0.5 1.6 0.5H8.2L10.2 2.6H21Q22 2.6 22 3.6V6H0.5Z" fill="#e9a91e"/><path d="M0.5 3.4H22V17.4Q22 18.4 21 18.4H1.5Q0.5 18.4 0.5 17.4Z" fill="#fcd566"/><path d="M4.6 18.4V11.2Q4.6 10.2 5.6 10.2H16.8Q17.8 10.2 17.8 11.2V18.4H14.6V14H7.8V18.4Z" fill="#2e8ce2"/></svg>
<svg class="a" style="left:603px;top:737px;" width="21.5" height="21.5" viewBox="0 0 21.5 21.5"><defs><linearGradient id="rag" x1="0" y1="0" x2="0" y2="1"><stop offset="0" stop-color="#c9262b"/><stop offset=".5" stop-color="#ad1419"/><stop offset="1" stop-color="#97090f"/></linearGradient></defs><rect x="0.3" y="0.3" width="20.8" height="20.8" rx="4.5" fill="url(#rag)"/><path d="M2 6Q2 2 6 2H15.4Q19.4 2 19.4 6V9Q10 6 2 9Z" fill="#fff" opacity=".13"/><circle cx="4.58" cy="12.75" r="1.75" fill="#fff" opacity="0.95"/><circle cx="4.30" cy="9.51" r="1.63" fill="#fff" opacity="0.92"/><circle cx="5.67" cy="6.55" r="1.51" fill="#fff" opacity="0.89"/><circle cx="8.35" cy="4.68" r="1.39" fill="#fff" opacity="0.86"/><circle cx="11.59" cy="4.40" r="1.27" fill="#fff" opacity="0.83"/><circle cx="14.55" cy="5.77" r="1.15" fill="#fff" opacity="0.80"/><circle cx="16.42" cy="8.45" r="1.03" fill="#fff" opacity="0.77"/><circle cx="16.70" cy="11.69" r="0.91" fill="#fff" opacity="0.74"/><circle cx="15.33" cy="14.65" r="0.79" fill="#fff" opacity="0.71"/><circle cx="12.65" cy="16.52" r="0.67" fill="#fff" opacity="0.68"/><circle cx="9.41" cy="16.80" r="0.55" fill="#fff" opacity="0.65"/></svg>
<svg class="a" style="left:651px;top:736.5px;" width="25" height="23" viewBox="0 0 25 23"><rect x="6" y="0.3" width="18" height="22" rx="1.4" fill="#b45ee4"/><rect x="19" y="0.3" width="5" height="5.5" fill="#ca8cf0"/><rect x="19" y="5.8" width="5" height="5.5" fill="#b45ee4"/><rect x="19" y="11.3" width="5" height="5.5" fill="#9b3fd0"/><rect x="19" y="16.8" width="5" height="5.5" fill="#8527ba"/><rect x="0" y="4.2" width="14.2" height="14.6" rx="1.2" fill="#7719aa"/></svg>
<span class="t" style="left:654.2px;top:741.45px;font-size:11.5px;line-height:15.5px;color:#fff;font-weight:bold;">N</span>
<svg class="a" style="left:699.5px;top:736px;" width="25" height="25" viewBox="0 0 25 25"><defs><linearGradient id="eg" x1="0" y1="0.2" x2="1" y2="0.6"><stop offset="0" stop-color="#1668c8"/><stop offset=".45" stop-color="#2a9fe0"/><stop offset=".75" stop-color="#3cc8a0"/><stop offset="1" stop-color="#62d860"/></linearGradient></defs><circle cx="12.5" cy="12" r="11.6" fill="url(#eg)"/><path d="M1.2 13A11.4 11.4 0 0 0 12 23.4Q6 20 7.4 13.6Q9 9.4 13.6 9.6L12 6Q3 6 1.2 13Z" fill="#1560bd" opacity=".75"/><circle cx="13.2" cy="12.8" r="3.5" fill="#f4f6f2"/><path d="M13.2 16.3Q18 17.6 22 14.4Q21 18.6 16.8 19.4Q13.6 19 13.2 16.3Z" fill="#2a86d8" opacity=".7"/><rect x="6.4" y="16.3" width="17.6" height="7.6" rx="1.6" fill="#8ee02e"/></svg>
<span class="t" style="left:708.3px;top:752.8px;font-size:7.2px;line-height:8px;font-weight:bold;color:#10220a;letter-spacing:-.1px">DEV</span>
<svg class="a" style="left:750px;top:738.5px;" width="23" height="17" viewBox="0 0 23 17"><path d="M0.6 9Q1.5 2.5 8 1.2L19 0.4Q21.8 0.4 21.8 3V12.2Q21.8 14.6 19 15L8 16Q0 16.4 0.6 9Z" fill="#2b2a18"/><path d="M2.2 10Q3 5.2 8.6 4.2L19.2 2.2Q21.4 2 21.4 4V12Q21.4 14.2 19 14.6L8.4 15.6Q1.6 16 2.2 10Z" fill="#fbe40f"/></svg>
<span class="t" style="left:755.3px;top:742.4px;font-size:11.4px;line-height:12px;font-weight:bold;color:#16160c;letter-spacing:-.2px;transform-origin:0 50%;transform:scaleX(.7) skewX(-5deg)">PDF</span>
<div class="a" style="left:786px;top:728px;width:44.5px;height:40px;background:#f7f3eb;"></div>
<div class="a" style="left:796px;top:733.4px;width:24.6px;height:24.6px;"><div class="a" style="left:3.84375px;top:4.6125px;width:19.9875px;height:19.9875px;border-radius:50%;background:radial-gradient(circle at 48% 55%,rgba(255,255,255,.8) 0,rgba(255,255,255,.35) 38%,rgba(255,255,255,0) 68%),conic-gradient(from 0deg,#ff3cff 0deg,#ff8ee0 55deg,#ffee60 105deg,#f4ff58 130deg,#58ffb0 175deg,#3cf0ff 225deg,#8cc4ff 285deg,#e07cff 335deg,#ff3cff 360deg);"></div><svg class="a" style="left:0;top:0" width="24.6" height="24.6" viewBox="0 0 16 16"><path d="M1.98 3.26L10.12 8.24L8.68 10.16L1.62 3.74Z" fill="#353538"/><path d="M10.12 8.24L10.9 8.9L9.5 10.8L8.68 10.16Z" fill="#c9c9d2"/><ellipse cx="11.5" cy="11.4" rx="2" ry="1.35" transform="rotate(52 11.5 11.4)" fill="#16161c"/></svg></div>
<div class="a" style="left:544.5px;top:766px;width:40px;height:2px;background:#744da9;"></div>
<div class="a" style="left:691.5px;top:766px;width:40px;height:2px;background:#744da9;"></div>
<div class="a" style="left:740.5px;top:766px;width:40px;height:2px;background:#744da9;"></div>
<div class="a" style="left:786px;top:766px;width:47px;height:2px;background:linear-gradient(90deg,#744da9 0,#744da9 94%,#a78fcb 94%);"></div>
<div class="a" style="left:1361px;top:728px;width:1px;height:40px;background:#cdc6ba;"></div>
<svg class="a" style="left:1092.2px;top:743.3px;" width="14" height="9" viewBox="0 0 14 9"><path d="M1 8L7 2L13 8" fill="none" stroke="#1a1a1a" stroke-width="1.5"/></svg>
<svg class="a" style="left:1117px;top:739px;" width="13" height="18" viewBox="0 0 13 18"><rect x="1.2" y="5" width="7.6" height="8" rx="1.8" fill="none" stroke="#1a1a1a" stroke-width="1.3"/><path d="M8.8 8l2.8-1.6v5.2L8.8 10" fill="none" stroke="#1a1a1a" stroke-width="1.3"/><path d="M2.2 2.4Q5 0.6 8 2.4M2.2 15.6Q5 17.4 8 15.6" fill="none" stroke="#1a1a1a" stroke-width="1.1"/></svg>
<svg class="a" style="left:1138.5px;top:741px;" width="18" height="13" viewBox="0 0 18 13"><rect x="5" y="3.2" width="11.2" height="7.8" fill="none" stroke="#1a1a1a" stroke-width="1.3"/><rect x="6.6" y="4.8" width="8" height="4.6" fill="#1a1a1a"/><rect x="16.4" y="5.4" width="1.2" height="3.4" fill="#1a1a1a"/><path d="M1.4 1.2v2.4M3.8 1.2v2.4" stroke="#1a1a1a" stroke-width="1"/><path d="M0.8 3.8h3.6v1.6q0 1.6-1.8 1.6q-1.8 0-1.8-1.6z" fill="#1a1a1a"/><path d="M2.6 7v3.4h2.6" fill="none" stroke="#1a1a1a" stroke-width="1.1"/></svg>
<svg class="a" style="left:1164.5px;top:741.3px;" width="15" height="14" viewBox="0 0 15 14"><path d="M1.5 13A11.5 11.5 0 0 1 13.5 1.5" fill="none" stroke="#1a1a1a" stroke-width="1.2"/><path d="M4.5 13A8.5 8.5 0 0 1 13.5 4.5" fill="none" stroke="#1a1a1a" stroke-width="1.2"/><path d="M7.5 13A5.5 5.5 0 0 1 13.5 7.5" fill="none" stroke="#1a1a1a" stroke-width="1.2"/><circle cx="12" cy="12" r="1.6" fill="#1a1a1a"/></svg>
<svg class="a" style="left:1186.5px;top:741px;" width="18" height="14" viewBox="0 0 18 14"><path d="M1 4.8H4L8 1.2V12.8L4 9.2H1Z" fill="none" stroke="#1a1a1a" stroke-width="1.2" stroke-linejoin="round"/><path d="M10.2 4.5Q11.8 7 10.2 9.5" fill="none" stroke="#1a1a1a" stroke-width="1.1"/><path d="M12.5 3Q15 7 12.5 11" fill="none" stroke="#1a1a1a" stroke-width="1.1" opacity=".65"/><path d="M14.8 1.5Q18 7 14.8 12.5" fill="none" stroke="#1a1a1a" stroke-width="1" opacity=".3"/></svg>
<span class="t" style="left:1213px;top:740px;font-size:12px;line-height:16px;color:#1a1a1a;letter-spacing:-1.002px;">ENG</span>
<span class="t" style="left:1254px;top:730.5px;font-size:12px;line-height:16px;color:#1a1a1a;letter-spacing:-0.358px;">05:51 PM</span>
<span class="t" style="left:1249.5px;top:749.5px;font-size:12px;line-height:16px;color:#1a1a1a;letter-spacing:-0.438px;">17-04-2021</span>
<svg class="a" style="left:1324px;top:739px;" width="18" height="18" viewBox="0 0 18 18"><path d="M1 1H16.5V13H8L4.5 16.5V13H1Z" fill="none" stroke="#1a1a1a" stroke-width="1.3" stroke-linejoin="round"/><circle cx="14.5" cy="13.5" r="3.4" fill="#efe7da"/><path d="M16.8 11.6A3 3 0 1 0 17 15.2A2.4 2.4 0 0 1 16.8 11.6Z" fill="#1a1a1a"/></svg>
</body></html>
